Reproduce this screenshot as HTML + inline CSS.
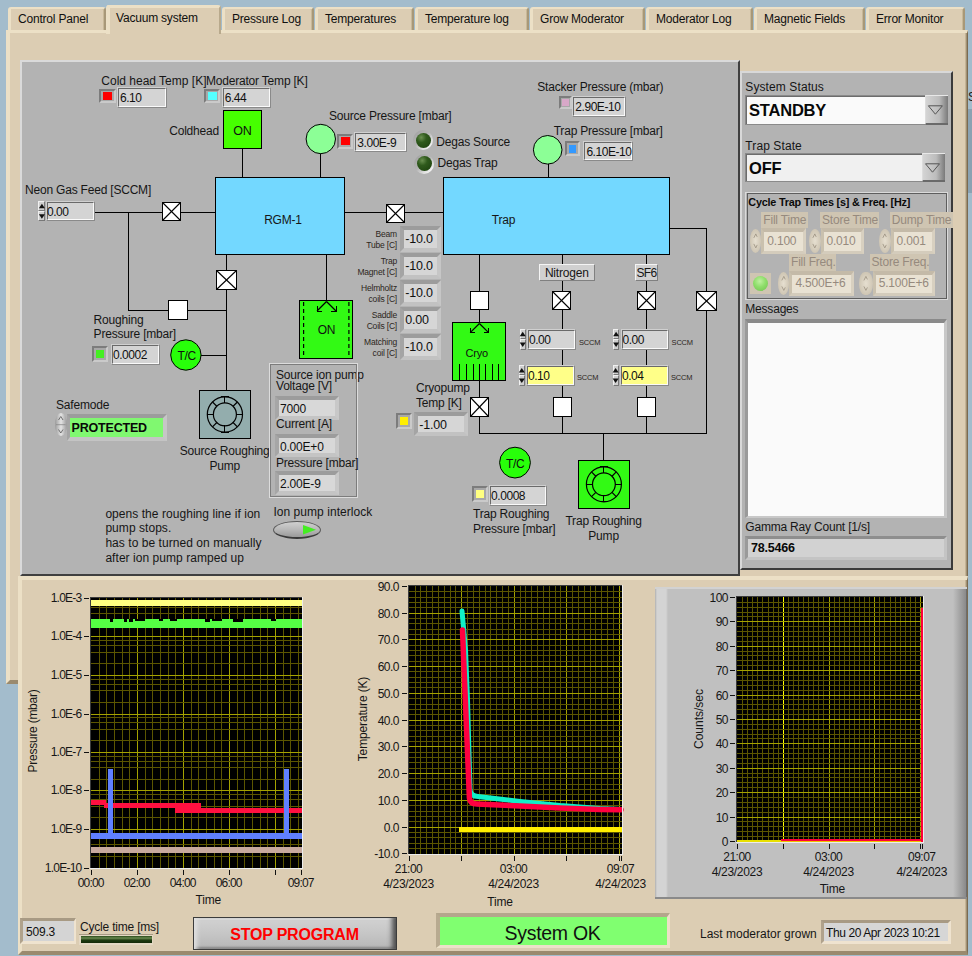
<!DOCTYPE html><html><head><meta charset="utf-8"><style>
html,body{margin:0;padding:0;}
body{width:972px;height:956px;position:relative;overflow:hidden;background:#a3bccc;font-family:"Liberation Sans", sans-serif;}
div{font-family:"Liberation Sans", sans-serif;letter-spacing:-0.2px;}
svg{position:absolute;left:0;top:0;}
</style></head><body>
<div style="position:absolute;left:6px;top:30px;width:962px;height:654px;box-sizing:border-box;background:#dccdb3;border-top:3px solid #ece0c6;border-left:4px solid #ece0c6;border-right:1px solid #7a6a50;border-bottom:4px solid #9a8a6e;box-shadow:inset -1px 0 0 #a09074, inset -2px 0 0 #c4b496;"></div>
<div style="position:absolute;left:8px;top:32px;width:957px;height:648px;box-sizing:border-box;"></div>
<div style="position:absolute;left:8px;top:7px;width:98px;height:23px;box-sizing:border-box;background:#dccdb3;border-top:2px solid #ece0c6;border-left:3px solid #ece0c6;border-right:2px solid #a89878;border-radius:3px 3px 0 0;box-shadow:inset -1px 0 0 #c8b898;"></div>
<div style="position:absolute;left:18px;top:12.1px;font-size:12px;line-height:15px;color:#101010;white-space:nowrap;">Control Panel</div>
<div style="position:absolute;left:106px;top:5px;width:115px;height:29px;box-sizing:border-box;background:#dccdb3;border-top:3px solid #ece0c6;border-left:4px solid #ece0c6;border-right:2px solid #b8a98c;border-radius:3px 3px 0 0;z-index:2;"></div>
<div style="position:absolute;left:110px;top:30px;width:109px;height:4px;box-sizing:border-box;background:#dccdb3;z-index:3;"></div>
<div style="position:absolute;left:116px;top:10.5px;font-size:12px;line-height:15px;color:#101010;white-space:nowrap;z-index:4;">Vacuum system</div>
<div style="position:absolute;left:222px;top:7px;width:92px;height:23px;box-sizing:border-box;background:#dccdb3;border-top:2px solid #ece0c6;border-left:3px solid #ece0c6;border-right:2px solid #a89878;border-radius:3px 3px 0 0;box-shadow:inset -1px 0 0 #c8b898;"></div>
<div style="position:absolute;left:232px;top:12.1px;font-size:12px;line-height:15px;color:#101010;white-space:nowrap;">Pressure Log</div>
<div style="position:absolute;left:315px;top:7px;width:99px;height:23px;box-sizing:border-box;background:#dccdb3;border-top:2px solid #ece0c6;border-left:3px solid #ece0c6;border-right:2px solid #a89878;border-radius:3px 3px 0 0;box-shadow:inset -1px 0 0 #c8b898;"></div>
<div style="position:absolute;left:325px;top:12.1px;font-size:12px;line-height:15px;color:#101010;white-space:nowrap;">Temperatures</div>
<div style="position:absolute;left:415px;top:7px;width:114px;height:23px;box-sizing:border-box;background:#dccdb3;border-top:2px solid #ece0c6;border-left:3px solid #ece0c6;border-right:2px solid #a89878;border-radius:3px 3px 0 0;box-shadow:inset -1px 0 0 #c8b898;"></div>
<div style="position:absolute;left:425px;top:12.1px;font-size:12px;line-height:15px;color:#101010;white-space:nowrap;">Temperature log</div>
<div style="position:absolute;left:530px;top:7px;width:115px;height:23px;box-sizing:border-box;background:#dccdb3;border-top:2px solid #ece0c6;border-left:3px solid #ece0c6;border-right:2px solid #a89878;border-radius:3px 3px 0 0;box-shadow:inset -1px 0 0 #c8b898;"></div>
<div style="position:absolute;left:540px;top:12.1px;font-size:12px;line-height:15px;color:#101010;white-space:nowrap;">Grow Moderator</div>
<div style="position:absolute;left:646px;top:7px;width:107px;height:23px;box-sizing:border-box;background:#dccdb3;border-top:2px solid #ece0c6;border-left:3px solid #ece0c6;border-right:2px solid #a89878;border-radius:3px 3px 0 0;box-shadow:inset -1px 0 0 #c8b898;"></div>
<div style="position:absolute;left:656px;top:12.1px;font-size:12px;line-height:15px;color:#101010;white-space:nowrap;">Moderator Log</div>
<div style="position:absolute;left:754px;top:7px;width:111px;height:23px;box-sizing:border-box;background:#dccdb3;border-top:2px solid #ece0c6;border-left:3px solid #ece0c6;border-right:2px solid #a89878;border-radius:3px 3px 0 0;box-shadow:inset -1px 0 0 #c8b898;"></div>
<div style="position:absolute;left:764px;top:12.1px;font-size:12px;line-height:15px;color:#101010;white-space:nowrap;">Magnetic Fields</div>
<div style="position:absolute;left:866px;top:7px;width:99px;height:23px;box-sizing:border-box;background:#dccdb3;border-top:2px solid #ece0c6;border-left:3px solid #ece0c6;border-right:2px solid #a89878;border-radius:3px 3px 0 0;box-shadow:inset -1px 0 0 #c8b898;"></div>
<div style="position:absolute;left:876px;top:12.1px;font-size:12px;line-height:15px;color:#101010;white-space:nowrap;">Error Monitor</div>
<div style="position:absolute;left:20px;top:60px;width:720px;height:516px;box-sizing:border-box;background:#b3b3b3;border-top:2px solid #dadada;border-left:2px solid #dadada;border-right:2px solid #404040;border-bottom:2px solid #404040;"></div>
<div style="position:absolute;left:740px;top:71px;width:213px;height:499px;box-sizing:border-box;background:#b3b3b3;border-top:2px solid #d8d8d8;border-left:2px solid #d8d8d8;border-right:2px solid #3a3a3a;border-bottom:2px solid #3a3a3a;"></div>
<svg width="972" height="956" viewBox="0 0 972 956" style="position:absolute;left:0;top:0"><rect x="94" y="212" width="122" height="1" fill="#000"/><rect x="128" y="212" width="1" height="99" fill="#000"/><rect x="128" y="310" width="99" height="1" fill="#000"/><rect x="242" y="148" width="1" height="30" fill="#000"/><rect x="320" y="153" width="1" height="25" fill="#000"/><rect x="344" y="212" width="100" height="1" fill="#000"/><rect x="226" y="254" width="1" height="137" fill="#000"/><rect x="201" y="355" width="26" height="1" fill="#000"/><rect x="326" y="254" width="1" height="47" fill="#000"/><rect x="548" y="164" width="1" height="14" fill="#000"/><rect x="479" y="254" width="1" height="180" fill="#000"/><rect x="562" y="254" width="1" height="180" fill="#000"/><rect x="646" y="254" width="1" height="180" fill="#000"/><rect x="669" y="228" width="38" height="1" fill="#000"/><rect x="706" y="228" width="1" height="206" fill="#000"/><rect x="479" y="433" width="228" height="1" fill="#000"/><rect x="603" y="433" width="1" height="28" fill="#000"/><rect x="215.5" y="177.5" width="129" height="77" fill="#73d8ff" stroke="#000" stroke-width="1"/><rect x="443.5" y="177.5" width="226" height="77" fill="#73d8ff" stroke="#000" stroke-width="1"/><rect x="223.5" y="110.5" width="38" height="38" fill="#46ff00" stroke="#000" stroke-width="1"/><circle cx="320.8" cy="139" r="14.7" fill="#8cff96" stroke="#000" stroke-width="1"/><circle cx="547.7" cy="149.8" r="14.3" fill="#8cff96" stroke="#000" stroke-width="1"/><rect x="162.5" y="202.5" width="18" height="18" fill="#fff" stroke="#000" stroke-width="1"/><line x1="162.5" y1="202.5" x2="180.5" y2="220.5" stroke="#000" stroke-width="1.1"/><line x1="162.5" y1="220.5" x2="180.5" y2="202.5" stroke="#000" stroke-width="1.1"/><rect x="386.5" y="204.5" width="18" height="18" fill="#fff" stroke="#000" stroke-width="1"/><line x1="386.5" y1="204.5" x2="404.5" y2="222.5" stroke="#000" stroke-width="1.1"/><line x1="386.5" y1="222.5" x2="404.5" y2="204.5" stroke="#000" stroke-width="1.1"/><rect x="216.5" y="270.5" width="20" height="19" fill="#fff" stroke="#000" stroke-width="1"/><line x1="216.5" y1="270.5" x2="236.5" y2="289.5" stroke="#000" stroke-width="1.1"/><line x1="216.5" y1="289.5" x2="236.5" y2="270.5" stroke="#000" stroke-width="1.1"/><rect x="168.5" y="300.5" width="19" height="19" fill="#fff" stroke="#000" stroke-width="1"/><circle cx="185.9" cy="355" r="15.2" fill="#28ff0a" stroke="#000" stroke-width="1"/><rect x="199.5" y="390.5" width="51" height="48" fill="#93adad" stroke="#000" stroke-width="1"/><circle cx="224.9" cy="414.4" r="17.6" fill="none" stroke="#000" stroke-width="1.2"/><circle cx="224.9" cy="414.4" r="11.5" fill="none" stroke="#000" stroke-width="1.2"/><rect x="236" y="414" width="7" height="1" fill="#000"/><line x1="233.0817279836453" y1="422.5317279836453" x2="237.39507934888323" y2="426.8450793488832" stroke="#000" stroke-width="1.2"/><rect x="224" y="425" width="1" height="8" fill="#000"/><line x1="216.81827201635468" y1="422.5317279836453" x2="212.50492065111675" y2="426.8450793488832" stroke="#000" stroke-width="1.2"/><rect x="207" y="414" width="7" height="1" fill="#000"/><line x1="216.81827201635468" y1="406.2682720163547" x2="212.50492065111675" y2="401.95492065111677" stroke="#000" stroke-width="1.2"/><rect x="224" y="396" width="1" height="7" fill="#000"/><line x1="233.0817279836453" y1="406.2682720163547" x2="237.39507934888323" y2="401.9549206511167" stroke="#000" stroke-width="1.2"/><rect x="221" y="396" width="8" height="1" fill="#000"/><rect x="221" y="432" width="8" height="1" fill="#000"/><rect x="299.5" y="300.5" width="53" height="58" fill="#32fa14" stroke="#000" stroke-width="1"/><line x1="303.6" y1="302" x2="303.6" y2="357" stroke="#000" stroke-width="1.2" stroke-dasharray="4,3"/><line x1="348.9" y1="302" x2="348.9" y2="357" stroke="#000" stroke-width="1.2" stroke-dasharray="4,3"/><line x1="326.5" y1="301.5" x2="317.0" y2="311.0" stroke="#000" stroke-width="1.2"/><line x1="326.5" y1="301.5" x2="336.0" y2="311.0" stroke="#000" stroke-width="1.2"/><rect x="317" y="306" width="1" height="6" fill="#000"/><rect x="317" y="311" width="5" height="1" fill="#000"/><rect x="336" y="306" width="1" height="6" fill="#000"/><rect x="331" y="311" width="6" height="1" fill="#000"/><rect x="470.5" y="291.5" width="18" height="18" fill="#fff" stroke="#000" stroke-width="1"/><rect x="452.5" y="322.5" width="53" height="58" fill="#32fa14" stroke="#000" stroke-width="1"/><line x1="479.4" y1="323.5" x2="470.2" y2="332.7" stroke="#000" stroke-width="1.2"/><line x1="479.4" y1="323.5" x2="488.59999999999997" y2="332.7" stroke="#000" stroke-width="1.2"/><rect x="470" y="328" width="1" height="5" fill="#000"/><rect x="470" y="332" width="5" height="1" fill="#000"/><rect x="488" y="328" width="1" height="5" fill="#000"/><rect x="484" y="332" width="5" height="1" fill="#000"/><rect x="459" y="364" width="1" height="17" fill="#000"/><rect x="466" y="364" width="1" height="17" fill="#000"/><rect x="473" y="364" width="1" height="17" fill="#000"/><rect x="479" y="364" width="1" height="17" fill="#000"/><rect x="485" y="364" width="1" height="17" fill="#000"/><rect x="492" y="364" width="1" height="17" fill="#000"/><rect x="498" y="364" width="1" height="17" fill="#000"/><rect x="470.5" y="397.5" width="18" height="19" fill="#fff" stroke="#000" stroke-width="1"/><line x1="470.5" y1="397.5" x2="488.5" y2="416.5" stroke="#000" stroke-width="1.1"/><line x1="470.5" y1="416.5" x2="488.5" y2="397.5" stroke="#000" stroke-width="1.1"/><rect x="552.5" y="291.5" width="18" height="18" fill="#fff" stroke="#000" stroke-width="1"/><line x1="552.5" y1="291.5" x2="570.5" y2="309.5" stroke="#000" stroke-width="1.1"/><line x1="552.5" y1="309.5" x2="570.5" y2="291.5" stroke="#000" stroke-width="1.1"/><rect x="637.5" y="291.5" width="18" height="18" fill="#fff" stroke="#000" stroke-width="1"/><line x1="637.5" y1="291.5" x2="655.5" y2="309.5" stroke="#000" stroke-width="1.1"/><line x1="637.5" y1="309.5" x2="655.5" y2="291.5" stroke="#000" stroke-width="1.1"/><rect x="696.5" y="291.5" width="20" height="19" fill="#fff" stroke="#000" stroke-width="1"/><line x1="696.5" y1="291.5" x2="716.5" y2="310.5" stroke="#000" stroke-width="1.1"/><line x1="696.5" y1="310.5" x2="716.5" y2="291.5" stroke="#000" stroke-width="1.1"/><rect x="553.5" y="397.5" width="18" height="19" fill="#fff" stroke="#000" stroke-width="1"/><rect x="637.5" y="397.5" width="18" height="19" fill="#fff" stroke="#000" stroke-width="1"/><circle cx="515" cy="462.6" r="15.4" fill="#28ff0a" stroke="#000" stroke-width="1"/><rect x="578.5" y="460.5" width="51" height="48" fill="#32fa14" stroke="#000" stroke-width="1"/><circle cx="603.9" cy="484.3" r="17.5" fill="none" stroke="#000" stroke-width="1.2"/><circle cx="603.9" cy="484.3" r="11.4" fill="none" stroke="#000" stroke-width="1.2"/><rect x="615" y="484" width="7" height="1" fill="#000"/><line x1="611.9843586944202" y1="492.3843586944202" x2="616.2725837410256" y2="496.6725837410257" stroke="#000" stroke-width="1.2"/><rect x="603" y="495" width="1" height="7" fill="#000"/><line x1="595.8156413055798" y1="492.3843586944202" x2="591.5274162589743" y2="496.6725837410257" stroke="#000" stroke-width="1.2"/><rect x="586" y="484" width="7" height="1" fill="#000"/><line x1="595.8156413055798" y1="476.2156413055798" x2="591.5274162589743" y2="471.92741625897435" stroke="#000" stroke-width="1.2"/><rect x="603" y="466" width="1" height="7" fill="#000"/><line x1="611.9843586944202" y1="476.2156413055798" x2="616.2725837410256" y2="471.92741625897435" stroke="#000" stroke-width="1.2"/><rect x="600" y="466" width="8" height="1" fill="#000"/><rect x="600" y="501" width="8" height="1" fill="#000"/></svg>
<div style="position:absolute;left:101.3px;top:73.5px;font-size:12px;line-height:15px;color:#161616;white-space:nowrap;letter-spacing:0;">Cold head Temp [K]</div>
<div style="position:absolute;left:206px;top:73.5px;font-size:12px;line-height:15px;color:#161616;white-space:nowrap;">Moderator Temp [K]</div>
<div style="position:absolute;left:99.3px;top:88.7px;width:16.400000000000006px;height:14.799999999999997px;box-sizing:border-box;background:#a8a8a8;border-top:2px solid #7c7c7c;border-left:2px solid #7c7c7c;border-right:2px solid #cacaca;border-bottom:2px solid #cacaca;"></div>
<div style="position:absolute;left:102.8px;top:92.2px;width:9.400000000000006px;height:7.799999999999997px;box-sizing:border-box;background:#ff0000;"></div>
<div style="position:absolute;left:117px;top:87px;width:50px;height:21px;box-sizing:border-box;background:#e6e6e6;border-top:1px solid #d0d0d0;border-left:1px solid #d0d0d0;border-right:1px solid #8a8a8a;border-bottom:1px solid #8a8a8a;"></div>
<div style="position:absolute;left:118px;top:88px;width:48px;height:19px;box-sizing:border-box;background:#d4d4d4;border-top:1px solid #6a6a6a;border-left:1px solid #6a6a6a;border-right:1px solid #fafafa;border-bottom:1px solid #fafafa;"></div>
<div style="position:absolute;left:120px;top:88px;height:21px;line-height:21px;font-size:12px;color:#101010;white-space:nowrap;letter-spacing:-0.45px;">6.10</div>
<div style="position:absolute;left:204.2px;top:88.7px;width:16.30000000000001px;height:14.799999999999997px;box-sizing:border-box;background:#a8a8a8;border-top:2px solid #7c7c7c;border-left:2px solid #7c7c7c;border-right:2px solid #cacaca;border-bottom:2px solid #cacaca;"></div>
<div style="position:absolute;left:207.7px;top:92.2px;width:9.300000000000011px;height:7.799999999999997px;box-sizing:border-box;background:#55ffff;"></div>
<div style="position:absolute;left:221.7px;top:87px;width:48.900000000000034px;height:21px;box-sizing:border-box;background:#e6e6e6;border-top:1px solid #d0d0d0;border-left:1px solid #d0d0d0;border-right:1px solid #8a8a8a;border-bottom:1px solid #8a8a8a;"></div>
<div style="position:absolute;left:222.7px;top:88px;width:46.900000000000034px;height:19px;box-sizing:border-box;background:#d4d4d4;border-top:1px solid #6a6a6a;border-left:1px solid #6a6a6a;border-right:1px solid #fafafa;border-bottom:1px solid #fafafa;"></div>
<div style="position:absolute;left:224.7px;top:88px;height:21px;line-height:21px;font-size:12px;color:#101010;white-space:nowrap;letter-spacing:-0.45px;">6.44</div>
<div style="position:absolute;right:753px;top:124.1px;font-size:12px;line-height:15px;color:#161616;white-space:nowrap;text-align:right;">Coldhead</div>
<div style="position:absolute;left:92.5px;width:300px;text-align:center;top:123.7px;font-size:12.5px;line-height:15.5px;color:#101010;white-space:nowrap;">ON</div>
<div style="position:absolute;left:329px;top:109.3px;font-size:12px;line-height:15px;color:#161616;white-space:nowrap;">Source Pressure [mbar]</div>
<div style="position:absolute;left:337.3px;top:133.5px;width:15.899999999999977px;height:15.199999999999989px;box-sizing:border-box;background:#a8a8a8;border-top:2px solid #7c7c7c;border-left:2px solid #7c7c7c;border-right:2px solid #cacaca;border-bottom:2px solid #cacaca;"></div>
<div style="position:absolute;left:340.8px;top:137.0px;width:8.899999999999977px;height:8.199999999999989px;box-sizing:border-box;background:#ff0000;"></div>
<div style="position:absolute;left:354.3px;top:131.7px;width:53.19999999999999px;height:20.80000000000001px;box-sizing:border-box;background:#e6e6e6;border-top:1px solid #d0d0d0;border-left:1px solid #d0d0d0;border-right:1px solid #8a8a8a;border-bottom:1px solid #8a8a8a;"></div>
<div style="position:absolute;left:355.3px;top:132.7px;width:51.19999999999999px;height:18.80000000000001px;box-sizing:border-box;background:#d4d4d4;border-top:1px solid #6a6a6a;border-left:1px solid #6a6a6a;border-right:1px solid #fafafa;border-bottom:1px solid #fafafa;"></div>
<div style="position:absolute;left:357.3px;top:132.7px;height:20.80000000000001px;line-height:20.80000000000001px;font-size:12px;color:#101010;white-space:nowrap;letter-spacing:-0.45px;">3.00E-9</div>
<div style="position:absolute;left:413.3px;top:130.0px;width:20px;height:20px;border-radius:50%;background:linear-gradient(135deg,#a0a0a0 0%,#b3b3b3 45%,#f4f4f4 85%);"></div>
<div style="position:absolute;left:415.8px;top:132.5px;width:15px;height:15px;border-radius:50%;background:radial-gradient(circle at 35% 30%, #6a9050 0%, #2f5a1c 35%, #224812 75%, #163008 100%);"></div>
<div style="position:absolute;left:414.3px;top:153.9px;width:20px;height:20px;border-radius:50%;background:linear-gradient(135deg,#a0a0a0 0%,#b3b3b3 45%,#f4f4f4 85%);"></div>
<div style="position:absolute;left:416.8px;top:156.4px;width:15px;height:15px;border-radius:50%;background:radial-gradient(circle at 35% 30%, #6a9050 0%, #2f5a1c 35%, #224812 75%, #163008 100%);"></div>
<div style="position:absolute;left:436.3px;top:134.5px;font-size:12px;line-height:15px;color:#161616;white-space:nowrap;">Degas Source</div>
<div style="position:absolute;left:437.5px;top:156.0px;font-size:12px;line-height:15px;color:#161616;white-space:nowrap;">Degas Trap</div>
<div style="position:absolute;left:537.3px;top:80.0px;font-size:12px;line-height:15px;color:#161616;white-space:nowrap;">Stacker Pressure (mbar)</div>
<div style="position:absolute;left:559.2px;top:96.3px;width:12.699999999999932px;height:12.400000000000006px;box-sizing:border-box;background:#a8a8a8;border-top:2px solid #7c7c7c;border-left:2px solid #7c7c7c;border-right:2px solid #cacaca;border-bottom:2px solid #cacaca;"></div>
<div style="position:absolute;left:562.2px;top:99.3px;width:6.699999999999932px;height:6.400000000000006px;box-sizing:border-box;background:#d8a8c8;"></div>
<div style="position:absolute;left:572.3px;top:96px;width:53.40000000000009px;height:21px;box-sizing:border-box;background:#e6e6e6;border-top:1px solid #d0d0d0;border-left:1px solid #d0d0d0;border-right:1px solid #8a8a8a;border-bottom:1px solid #8a8a8a;"></div>
<div style="position:absolute;left:573.3px;top:97px;width:51.40000000000009px;height:19px;box-sizing:border-box;background:#d4d4d4;border-top:1px solid #6a6a6a;border-left:1px solid #6a6a6a;border-right:1px solid #fafafa;border-bottom:1px solid #fafafa;"></div>
<div style="position:absolute;left:575.3px;top:97px;height:21px;line-height:21px;font-size:12px;color:#101010;white-space:nowrap;letter-spacing:-0.45px;">2.90E-10</div>
<div style="position:absolute;left:553.7px;top:124.1px;font-size:12px;line-height:15px;color:#161616;white-space:nowrap;">Trap Pressure [mbar]</div>
<div style="position:absolute;left:565.3px;top:141px;width:14.700000000000045px;height:15.400000000000006px;box-sizing:border-box;background:#a8a8a8;border-top:2px solid #7c7c7c;border-left:2px solid #7c7c7c;border-right:2px solid #cacaca;border-bottom:2px solid #cacaca;"></div>
<div style="position:absolute;left:568.8px;top:144.5px;width:7.7000000000000455px;height:8.400000000000006px;box-sizing:border-box;background:#3399ff;"></div>
<div style="position:absolute;left:583.4px;top:140.5px;width:49.39999999999998px;height:20.0px;box-sizing:border-box;background:#e6e6e6;border-top:1px solid #d0d0d0;border-left:1px solid #d0d0d0;border-right:1px solid #8a8a8a;border-bottom:1px solid #8a8a8a;"></div>
<div style="position:absolute;left:584.4px;top:141.5px;width:47.39999999999998px;height:18.0px;box-sizing:border-box;background:#d4d4d4;border-top:1px solid #6a6a6a;border-left:1px solid #6a6a6a;border-right:1px solid #fafafa;border-bottom:1px solid #fafafa;"></div>
<div style="position:absolute;left:586.4px;top:141.5px;height:20.0px;line-height:20.0px;font-size:12px;color:#101010;white-space:nowrap;letter-spacing:-0.45px;">6.10E-10</div>
<div style="position:absolute;left:25px;top:182.5px;font-size:12px;line-height:15px;color:#161616;white-space:nowrap;">Neon Gas Feed [SCCM]</div>
<div style="position:absolute;left:38.3px;top:201.3px;width:7.200000000000003px;height:10.0px;box-sizing:border-box;background:#cfcfcf;border-top:1px solid #f0f0f0;border-left:1px solid #f0f0f0;border-right:1px solid #777;border-bottom:1px solid #777;"></div>
<svg width="972" height="956" style="position:absolute;left:0;top:0"><path d="M38.9,208.3 L44.9,208.3 L41.9,203.8Z" fill="#111"/></svg>
<div style="position:absolute;left:38.3px;top:211.3px;width:7.200000000000003px;height:10.0px;box-sizing:border-box;background:#cfcfcf;border-top:1px solid #f0f0f0;border-left:1px solid #f0f0f0;border-right:1px solid #777;border-bottom:1px solid #777;"></div>
<svg width="972" height="956" style="position:absolute;left:0;top:0"><path d="M38.9,214.3 L44.9,214.3 L41.9,218.8Z" fill="#111"/></svg>
<div style="position:absolute;left:46px;top:201.3px;width:48.5px;height:20.0px;box-sizing:border-box;background:#e6e6e6;border-top:1px solid #d0d0d0;border-left:1px solid #d0d0d0;border-right:1px solid #8a8a8a;border-bottom:1px solid #8a8a8a;"></div>
<div style="position:absolute;left:47px;top:202.3px;width:46.5px;height:18.0px;box-sizing:border-box;background:#d4d4d4;border-top:1px solid #6a6a6a;border-left:1px solid #6a6a6a;border-right:1px solid #fafafa;border-bottom:1px solid #fafafa;"></div>
<div style="position:absolute;left:47px;top:202.3px;height:20.0px;line-height:20.0px;font-size:12px;color:#101010;white-space:nowrap;letter-spacing:-0.45px;">0.00</div>
<div style="position:absolute;left:133px;width:300px;text-align:center;top:212.5px;font-size:12px;line-height:15px;color:#161616;white-space:nowrap;">RGM-1</div>
<div style="position:absolute;left:353.5px;width:300px;text-align:center;top:212.5px;font-size:12px;line-height:15px;color:#161616;white-space:nowrap;">Trap</div>
<div style="position:absolute;left:400.3px;top:226.3px;width:41.0px;height:25.5px;box-sizing:border-box;background:#d6d6d6;border-top:4px solid #9c9c9c;border-left:4px solid #a4a4a4;border-right:4px solid #c6c6c6;border-bottom:4px solid #c2c2c2;"></div>
<div style="position:absolute;left:405.3px;top:227.3px;height:25.5px;line-height:25.5px;font-size:12.5px;color:#101010;white-space:nowrap;">-10.0</div>
<div style="position:absolute;right:575px;top:228.6px;font-size:8.5px;line-height:11.5px;color:#2c261c;white-space:nowrap;text-align:right;">Beam</div>
<div style="position:absolute;right:575px;top:239.6px;font-size:8.5px;line-height:11.5px;color:#2c261c;white-space:nowrap;text-align:right;">Tube [C]</div>
<div style="position:absolute;left:400.3px;top:253.4px;width:41.0px;height:25.49999999999997px;box-sizing:border-box;background:#d6d6d6;border-top:4px solid #9c9c9c;border-left:4px solid #a4a4a4;border-right:4px solid #c6c6c6;border-bottom:4px solid #c2c2c2;"></div>
<div style="position:absolute;left:405.3px;top:254.4px;height:25.49999999999997px;line-height:25.49999999999997px;font-size:12.5px;color:#101010;white-space:nowrap;">-10.0</div>
<div style="position:absolute;right:575px;top:255.6px;font-size:8.5px;line-height:11.5px;color:#2c261c;white-space:nowrap;text-align:right;">Trap</div>
<div style="position:absolute;right:575px;top:266.6px;font-size:8.5px;line-height:11.5px;color:#2c261c;white-space:nowrap;text-align:right;">Magnet [C]</div>
<div style="position:absolute;left:400.3px;top:280.4px;width:41.0px;height:25.5px;box-sizing:border-box;background:#d6d6d6;border-top:4px solid #9c9c9c;border-left:4px solid #a4a4a4;border-right:4px solid #c6c6c6;border-bottom:4px solid #c2c2c2;"></div>
<div style="position:absolute;left:405.3px;top:281.4px;height:25.5px;line-height:25.5px;font-size:12.5px;color:#101010;white-space:nowrap;">-10.0</div>
<div style="position:absolute;right:575px;top:282.6px;font-size:8.5px;line-height:11.5px;color:#2c261c;white-space:nowrap;text-align:right;">Helmholtz</div>
<div style="position:absolute;right:575px;top:293.6px;font-size:8.5px;line-height:11.5px;color:#2c261c;white-space:nowrap;text-align:right;">coils [C]</div>
<div style="position:absolute;left:400.3px;top:307.4px;width:41.0px;height:25.5px;box-sizing:border-box;background:#d6d6d6;border-top:4px solid #9c9c9c;border-left:4px solid #a4a4a4;border-right:4px solid #c6c6c6;border-bottom:4px solid #c2c2c2;"></div>
<div style="position:absolute;left:405.3px;top:308.4px;height:25.5px;line-height:25.5px;font-size:12.5px;color:#101010;white-space:nowrap;">0.00</div>
<div style="position:absolute;right:575px;top:309.6px;font-size:8.5px;line-height:11.5px;color:#2c261c;white-space:nowrap;text-align:right;">Saddle</div>
<div style="position:absolute;right:575px;top:320.6px;font-size:8.5px;line-height:11.5px;color:#2c261c;white-space:nowrap;text-align:right;">Coils [C]</div>
<div style="position:absolute;left:400.3px;top:334.4px;width:41.0px;height:25.5px;box-sizing:border-box;background:#d6d6d6;border-top:4px solid #9c9c9c;border-left:4px solid #a4a4a4;border-right:4px solid #c6c6c6;border-bottom:4px solid #c2c2c2;"></div>
<div style="position:absolute;left:405.3px;top:335.4px;height:25.5px;line-height:25.5px;font-size:12.5px;color:#101010;white-space:nowrap;">-10.0</div>
<div style="position:absolute;right:575px;top:336.6px;font-size:8.5px;line-height:11.5px;color:#2c261c;white-space:nowrap;text-align:right;">Matching</div>
<div style="position:absolute;right:575px;top:347.6px;font-size:8.5px;line-height:11.5px;color:#2c261c;white-space:nowrap;text-align:right;">coil [C]</div>
<div style="position:absolute;left:176.5px;width:300px;text-align:center;top:323.0px;font-size:12px;line-height:15px;color:#101010;white-space:nowrap;">ON</div>
<div style="position:absolute;left:538.7px;top:264.4px;width:56.299999999999955px;height:16.200000000000045px;box-sizing:border-box;background:#d0d0d0;border-top:1px solid #f4f4f4;border-left:1px solid #f4f4f4;border-right:1px solid #808080;border-bottom:1px solid #808080;"></div>
<div style="position:absolute;left:416.79999999999995px;width:300px;text-align:center;top:266.0px;font-size:12px;line-height:15px;color:#161616;white-space:nowrap;">Nitrogen</div>
<div style="position:absolute;left:635.3px;top:264.4px;width:22.700000000000045px;height:16.200000000000045px;box-sizing:border-box;background:#d0d0d0;border-top:1px solid #f4f4f4;border-left:1px solid #f4f4f4;border-right:1px solid #808080;border-bottom:1px solid #808080;"></div>
<div style="position:absolute;left:496.5px;width:300px;text-align:center;top:266.0px;font-size:12px;line-height:15px;color:#161616;white-space:nowrap;letter-spacing:-0.6px;">SF6</div>
<div style="position:absolute;left:519.6px;top:329.2px;width:6.199999999999932px;height:10.199999999999989px;box-sizing:border-box;background:#cfcfcf;border-top:1px solid #f0f0f0;border-left:1px solid #f0f0f0;border-right:1px solid #777;border-bottom:1px solid #777;"></div>
<svg width="972" height="956" style="position:absolute;left:0;top:0"><path d="M519.7,336.3 L525.7,336.3 L522.7,331.8Z" fill="#111"/></svg>
<div style="position:absolute;left:519.6px;top:339.4px;width:6.199999999999932px;height:10.200000000000045px;box-sizing:border-box;background:#cfcfcf;border-top:1px solid #f0f0f0;border-left:1px solid #f0f0f0;border-right:1px solid #777;border-bottom:1px solid #777;"></div>
<svg width="972" height="956" style="position:absolute;left:0;top:0"><path d="M519.7,342.5 L525.7,342.5 L522.7,347.0Z" fill="#111"/></svg>
<div style="position:absolute;left:527px;top:329.2px;width:48.60000000000002px;height:20.600000000000023px;box-sizing:border-box;background:#e6e6e6;border-top:1px solid #d0d0d0;border-left:1px solid #d0d0d0;border-right:1px solid #8a8a8a;border-bottom:1px solid #8a8a8a;"></div>
<div style="position:absolute;left:528px;top:330.2px;width:46.60000000000002px;height:18.600000000000023px;box-sizing:border-box;background:#d4d4d4;border-top:1px solid #6a6a6a;border-left:1px solid #6a6a6a;border-right:1px solid #fafafa;border-bottom:1px solid #fafafa;"></div>
<div style="position:absolute;left:529px;top:330.2px;height:20.600000000000023px;line-height:20.600000000000023px;font-size:12px;color:#101010;white-space:nowrap;letter-spacing:-0.45px;">0.00</div>
<div style="position:absolute;left:579px;top:337.8px;font-size:7.5px;line-height:10.5px;color:#2c261c;white-space:nowrap;">SCCM</div>
<div style="position:absolute;left:518.7px;top:365.3px;width:6.199999999999932px;height:10.150000000000034px;box-sizing:border-box;background:#cfcfcf;border-top:1px solid #f0f0f0;border-left:1px solid #f0f0f0;border-right:1px solid #777;border-bottom:1px solid #777;"></div>
<svg width="972" height="956" style="position:absolute;left:0;top:0"><path d="M518.8,372.4 L524.8,372.4 L521.8,367.9Z" fill="#111"/></svg>
<div style="position:absolute;left:518.7px;top:375.45000000000005px;width:6.199999999999932px;height:10.149999999999977px;box-sizing:border-box;background:#cfcfcf;border-top:1px solid #f0f0f0;border-left:1px solid #f0f0f0;border-right:1px solid #777;border-bottom:1px solid #777;"></div>
<svg width="972" height="956" style="position:absolute;left:0;top:0"><path d="M518.8,378.5 L524.8,378.5 L521.8,383.0Z" fill="#111"/></svg>
<div style="position:absolute;left:526px;top:365.3px;width:48.700000000000045px;height:20.30000000000001px;box-sizing:border-box;background:#e6e6e6;border-top:1px solid #d0d0d0;border-left:1px solid #d0d0d0;border-right:1px solid #8a8a8a;border-bottom:1px solid #8a8a8a;"></div>
<div style="position:absolute;left:527px;top:366.3px;width:46.700000000000045px;height:18.30000000000001px;box-sizing:border-box;background:#ffff88;border-top:1px solid #6a6a6a;border-left:1px solid #6a6a6a;border-right:1px solid #fafafa;border-bottom:1px solid #fafafa;"></div>
<div style="position:absolute;left:528px;top:366.3px;height:20.30000000000001px;line-height:20.30000000000001px;font-size:12px;color:#101010;white-space:nowrap;letter-spacing:-0.45px;">0.10</div>
<div style="position:absolute;left:577px;top:372.8px;font-size:7.5px;line-height:10.5px;color:#2c261c;white-space:nowrap;">SCCM</div>
<div style="position:absolute;left:613px;top:329.2px;width:6.2000000000000455px;height:10.199999999999989px;box-sizing:border-box;background:#cfcfcf;border-top:1px solid #f0f0f0;border-left:1px solid #f0f0f0;border-right:1px solid #777;border-bottom:1px solid #777;"></div>
<svg width="972" height="956" style="position:absolute;left:0;top:0"><path d="M613.1,336.3 L619.1,336.3 L616.1,331.8Z" fill="#111"/></svg>
<div style="position:absolute;left:613px;top:339.4px;width:6.2000000000000455px;height:10.200000000000045px;box-sizing:border-box;background:#cfcfcf;border-top:1px solid #f0f0f0;border-left:1px solid #f0f0f0;border-right:1px solid #777;border-bottom:1px solid #777;"></div>
<svg width="972" height="956" style="position:absolute;left:0;top:0"><path d="M613.1,342.5 L619.1,342.5 L616.1,347.0Z" fill="#111"/></svg>
<div style="position:absolute;left:620.5px;top:329.2px;width:48.5px;height:20.600000000000023px;box-sizing:border-box;background:#e6e6e6;border-top:1px solid #d0d0d0;border-left:1px solid #d0d0d0;border-right:1px solid #8a8a8a;border-bottom:1px solid #8a8a8a;"></div>
<div style="position:absolute;left:621.5px;top:330.2px;width:46.5px;height:18.600000000000023px;box-sizing:border-box;background:#d4d4d4;border-top:1px solid #6a6a6a;border-left:1px solid #6a6a6a;border-right:1px solid #fafafa;border-bottom:1px solid #fafafa;"></div>
<div style="position:absolute;left:622.5px;top:330.2px;height:20.600000000000023px;line-height:20.600000000000023px;font-size:12px;color:#101010;white-space:nowrap;letter-spacing:-0.45px;">0.00</div>
<div style="position:absolute;left:671.6px;top:337.8px;font-size:7.5px;line-height:10.5px;color:#2c261c;white-space:nowrap;">SCCM</div>
<div style="position:absolute;left:612.5px;top:365.3px;width:6.2000000000000455px;height:10.150000000000034px;box-sizing:border-box;background:#cfcfcf;border-top:1px solid #f0f0f0;border-left:1px solid #f0f0f0;border-right:1px solid #777;border-bottom:1px solid #777;"></div>
<svg width="972" height="956" style="position:absolute;left:0;top:0"><path d="M612.6,372.4 L618.6,372.4 L615.6,367.9Z" fill="#111"/></svg>
<div style="position:absolute;left:612.5px;top:375.45000000000005px;width:6.2000000000000455px;height:10.149999999999977px;box-sizing:border-box;background:#cfcfcf;border-top:1px solid #f0f0f0;border-left:1px solid #f0f0f0;border-right:1px solid #777;border-bottom:1px solid #777;"></div>
<svg width="972" height="956" style="position:absolute;left:0;top:0"><path d="M612.6,378.5 L618.6,378.5 L615.6,383.0Z" fill="#111"/></svg>
<div style="position:absolute;left:620px;top:365.3px;width:48.5px;height:20.30000000000001px;box-sizing:border-box;background:#e6e6e6;border-top:1px solid #d0d0d0;border-left:1px solid #d0d0d0;border-right:1px solid #8a8a8a;border-bottom:1px solid #8a8a8a;"></div>
<div style="position:absolute;left:621px;top:366.3px;width:46.5px;height:18.30000000000001px;box-sizing:border-box;background:#ffff88;border-top:1px solid #6a6a6a;border-left:1px solid #6a6a6a;border-right:1px solid #fafafa;border-bottom:1px solid #fafafa;"></div>
<div style="position:absolute;left:622px;top:366.3px;height:20.30000000000001px;line-height:20.30000000000001px;font-size:12px;color:#101010;white-space:nowrap;letter-spacing:-0.45px;">0.04</div>
<div style="position:absolute;left:671px;top:372.8px;font-size:7.5px;line-height:10.5px;color:#2c261c;white-space:nowrap;">SCCM</div>
<div style="position:absolute;left:326.8px;width:300px;text-align:center;top:346.3px;font-size:11px;line-height:14px;color:#101010;white-space:nowrap;">Cryo</div>
<div style="position:absolute;left:416px;top:380.5px;font-size:12px;line-height:15px;color:#161616;white-space:nowrap;">Cryopump</div>
<div style="position:absolute;left:416px;top:395.5px;font-size:12px;line-height:15px;color:#161616;white-space:nowrap;">Temp [K]</div>
<div style="position:absolute;left:396px;top:413.3px;width:15.800000000000011px;height:15.300000000000011px;box-sizing:border-box;background:#a8a8a8;border-top:2px solid #7c7c7c;border-left:2px solid #7c7c7c;border-right:2px solid #cacaca;border-bottom:2px solid #cacaca;"></div>
<div style="position:absolute;left:400px;top:417.3px;width:7.800000000000011px;height:7.300000000000011px;box-sizing:border-box;background:#ffee00;"></div>
<div style="position:absolute;left:414.3px;top:411.5px;width:53.89999999999998px;height:24.100000000000023px;box-sizing:border-box;background:#d6d6d6;border-top:4px solid #9c9c9c;border-left:4px solid #a4a4a4;border-right:4px solid #c6c6c6;border-bottom:4px solid #c2c2c2;"></div>
<div style="position:absolute;left:419.3px;top:412.5px;height:24.100000000000023px;line-height:24.100000000000023px;font-size:12.5px;color:#101010;white-space:nowrap;">-1.00</div>
<div style="position:absolute;left:365.20000000000005px;width:300px;text-align:center;top:456.5px;font-size:12px;line-height:15px;color:#101010;white-space:nowrap;letter-spacing:-0.4px;">T/C</div>
<div style="position:absolute;left:472px;top:486.3px;width:16.19999999999999px;height:15.300000000000011px;box-sizing:border-box;background:#a8a8a8;border-top:2px solid #7c7c7c;border-left:2px solid #7c7c7c;border-right:2px solid #cacaca;border-bottom:2px solid #cacaca;"></div>
<div style="position:absolute;left:476px;top:490.3px;width:8.199999999999989px;height:7.300000000000011px;box-sizing:border-box;background:#ffff80;"></div>
<div style="position:absolute;left:489.1px;top:485px;width:57.5px;height:20.600000000000023px;box-sizing:border-box;background:#e6e6e6;border-top:1px solid #d0d0d0;border-left:1px solid #d0d0d0;border-right:1px solid #8a8a8a;border-bottom:1px solid #8a8a8a;"></div>
<div style="position:absolute;left:490.1px;top:486px;width:55.5px;height:18.600000000000023px;box-sizing:border-box;background:#d4d4d4;border-top:1px solid #6a6a6a;border-left:1px solid #6a6a6a;border-right:1px solid #fafafa;border-bottom:1px solid #fafafa;"></div>
<div style="position:absolute;left:491.1px;top:486px;height:20.600000000000023px;line-height:20.600000000000023px;font-size:12px;color:#101010;white-space:nowrap;letter-spacing:-0.45px;">0.0008</div>
<div style="position:absolute;left:473px;top:506.5px;font-size:12px;line-height:15px;color:#161616;white-space:nowrap;">Trap Roughing</div>
<div style="position:absolute;left:473px;top:521.5px;font-size:12px;line-height:15px;color:#161616;white-space:nowrap;">Pressure [mbar]</div>
<div style="position:absolute;left:453.6px;width:300px;text-align:center;top:513.5px;font-size:12px;line-height:15px;color:#161616;white-space:nowrap;">Trap Roughing</div>
<div style="position:absolute;left:453.6px;width:300px;text-align:center;top:528.5px;font-size:12px;line-height:15px;color:#161616;white-space:nowrap;">Pump</div>
<div style="position:absolute;left:36.599999999999994px;width:300px;text-align:center;top:348.9px;font-size:12px;line-height:15px;color:#101010;white-space:nowrap;letter-spacing:-0.4px;">T/C</div>
<div style="position:absolute;left:93.6px;top:312.5px;font-size:12px;line-height:15px;color:#161616;white-space:nowrap;">Roughing</div>
<div style="position:absolute;left:93.6px;top:327.0px;font-size:12px;line-height:15px;color:#161616;white-space:nowrap;">Pressure [mbar]</div>
<div style="position:absolute;left:92.2px;top:345.8px;width:16.099999999999994px;height:16.0px;box-sizing:border-box;background:#a8a8a8;border-top:2px solid #7c7c7c;border-left:2px solid #7c7c7c;border-right:2px solid #cacaca;border-bottom:2px solid #cacaca;"></div>
<div style="position:absolute;left:96.2px;top:349.8px;width:8.099999999999994px;height:8.0px;box-sizing:border-box;background:#44ee22;"></div>
<div style="position:absolute;left:111px;top:344px;width:48.599999999999994px;height:20.5px;box-sizing:border-box;background:#e6e6e6;border-top:1px solid #d0d0d0;border-left:1px solid #d0d0d0;border-right:1px solid #8a8a8a;border-bottom:1px solid #8a8a8a;"></div>
<div style="position:absolute;left:112px;top:345px;width:46.599999999999994px;height:18.5px;box-sizing:border-box;background:#d4d4d4;border-top:1px solid #6a6a6a;border-left:1px solid #6a6a6a;border-right:1px solid #fafafa;border-bottom:1px solid #fafafa;"></div>
<div style="position:absolute;left:113px;top:345px;height:20.5px;line-height:20.5px;font-size:12px;color:#101010;white-space:nowrap;letter-spacing:-0.45px;">0.0002</div>
<div style="position:absolute;left:56px;top:397.5px;font-size:12px;line-height:15px;color:#161616;white-space:nowrap;">Safemode</div>
<div style="position:absolute;left:54.9px;top:413px;width:11.800000000000004px;height:23.399999999999977px;box-sizing:border-box;background:linear-gradient(90deg,#9a9a9a,#e4e4e4 50%,#9a9a9a);border-radius:6px/11px;"></div>
<svg width="972" height="956" style="position:absolute;left:0;top:0"><path d="M58.5,420 L60.8,416.5 L63,420 M58.5,429.5 L60.8,433 L63,429.5" stroke="#555" stroke-width="0.8" fill="none"/><line x1="56" y1="424.7" x2="65.5" y2="424.7" stroke="#888" stroke-width="0.8"/></svg>
<div style="position:absolute;left:66.7px;top:414.2px;width:100.3px;height:27.19999999999999px;box-sizing:border-box;background:#80f870;border-top:4px solid #9c9c9c;border-left:3px solid #a4a4a4;border-right:4px solid #c6c6c6;border-bottom:4px solid #c4c4c4;"></div>
<div style="position:absolute;left:71.6px;top:421.2px;font-size:12.5px;line-height:15.5px;color:#080808;white-space:nowrap;font-weight:bold;">PROTECTED</div>
<div style="position:absolute;left:74.69999999999999px;width:300px;text-align:center;top:443.5px;font-size:12px;line-height:15px;color:#161616;white-space:nowrap;">Source Roughing</div>
<div style="position:absolute;left:74.69999999999999px;width:300px;text-align:center;top:458.5px;font-size:12px;line-height:15px;color:#161616;white-space:nowrap;">Pump</div>
<div style="position:absolute;left:269.4px;top:362.6px;width:89.0px;height:135.5px;box-sizing:border-box;border:1px solid #dcdcdc;"></div>
<div style="position:absolute;left:270.4px;top:363.6px;width:87.0px;height:133.5px;box-sizing:border-box;border:1px solid #7c7c7c;"></div>
<div style="position:absolute;left:276px;top:367.8px;font-size:12px;line-height:15px;color:#161616;white-space:nowrap;">Source ion pump</div>
<div style="position:absolute;left:356.4px;top:364px;width:2.0px;height:15px;box-sizing:border-box;background:#7c7c7c;border-right:1px solid #dcdcdc;"></div>
<div style="position:absolute;left:276px;top:379.3px;font-size:12px;line-height:15px;color:#161616;white-space:nowrap;">Voltage [V]</div>
<div style="position:absolute;left:275px;top:395.8px;width:64px;height:23.80000000000001px;box-sizing:border-box;background:#d8d8d8;border-top:4px solid #9c9c9c;border-left:4px solid #a6a6a6;border-right:4px solid #c8c8c8;border-bottom:4px solid #c4c4c4;"></div>
<div style="position:absolute;left:280px;top:396.8px;height:23.80000000000001px;line-height:24.80000000000001px;font-size:12px;color:#101010;white-space:nowrap;">7000</div>
<div style="position:absolute;left:276px;top:417.1px;font-size:12px;line-height:15px;color:#161616;white-space:nowrap;">Current [A]</div>
<div style="position:absolute;left:275px;top:433.5px;width:64px;height:23.899999999999977px;box-sizing:border-box;background:#d8d8d8;border-top:4px solid #9c9c9c;border-left:4px solid #a6a6a6;border-right:4px solid #c8c8c8;border-bottom:4px solid #c4c4c4;"></div>
<div style="position:absolute;left:280px;top:434.5px;height:23.899999999999977px;line-height:24.899999999999977px;font-size:12px;color:#101010;white-space:nowrap;">0.00E+0</div>
<div style="position:absolute;left:276px;top:455.5px;font-size:12px;line-height:15px;color:#161616;white-space:nowrap;">Pressure [mbar]</div>
<div style="position:absolute;left:275px;top:471.3px;width:64px;height:23.899999999999977px;box-sizing:border-box;background:#d8d8d8;border-top:4px solid #9c9c9c;border-left:4px solid #a6a6a6;border-right:4px solid #c8c8c8;border-bottom:4px solid #c4c4c4;"></div>
<div style="position:absolute;left:280px;top:472.3px;height:23.899999999999977px;line-height:24.899999999999977px;font-size:12px;color:#101010;white-space:nowrap;">2.00E-9</div>
<div style="position:absolute;left:273.4px;top:504.5px;font-size:12px;line-height:15px;color:#161616;white-space:nowrap;letter-spacing:0.05px;">Ion pump interlock</div>
<div style="position:absolute;left:273px;top:520.5px;width:48px;height:18px;box-sizing:border-box;border-radius:50%;border:1px solid #5a5a5a;border-bottom:2px solid #3a3a3a;background:linear-gradient(180deg,#d0d0d0 0%,#b8b8b8 50%,#9a9a9a 100%);"></div>
<svg width="972" height="956" style="position:absolute;left:0;top:0"><path d="M303,525 L316,529.8 L303,534.5Z" fill="#44ee22"/></svg>
<div style="position:absolute;left:105.4px;top:506.5px;font-size:12px;line-height:15px;color:#161616;white-space:nowrap;letter-spacing:0.05px;">opens the roughing line if ion</div>
<div style="position:absolute;left:105.4px;top:521.2px;font-size:12px;line-height:15px;color:#161616;white-space:nowrap;letter-spacing:0.05px;">pump stops.</div>
<div style="position:absolute;left:105.4px;top:535.9px;font-size:12px;line-height:15px;color:#161616;white-space:nowrap;letter-spacing:0.05px;">has to be turned on manually</div>
<div style="position:absolute;left:105.4px;top:550.6px;font-size:12px;line-height:15px;color:#161616;white-space:nowrap;letter-spacing:0.05px;">after ion pump ramped up</div>
<div style="position:absolute;left:745.3px;top:79.5px;font-size:12px;line-height:15px;color:#161616;white-space:nowrap;letter-spacing:0.1px;">System Status</div>
<div style="position:absolute;left:745px;top:94.8px;width:202.70000000000005px;height:29.900000000000006px;box-sizing:border-box;background:#8a8a8a;"></div>
<div style="position:absolute;left:746px;top:95.8px;width:179px;height:27.900000000000006px;box-sizing:border-box;background:#fafafa;border-top:1px solid #6c6c6c;border-left:1px solid #6c6c6c;"></div>
<div style="position:absolute;left:925px;top:94.8px;width:22.700000000000045px;height:29.900000000000006px;box-sizing:border-box;background:linear-gradient(90deg,#d4d4d4 0%,#bcbcbc 60%,#7a7a7a 100%);border-top:1px solid #e8e8e8;border-left:1px solid #dcdcdc;border-bottom:2px solid #6a6a6a;"></div>
<svg width="972" height="956" style="position:absolute;left:0;top:0"><path d="M928.4,105.8 L942.4,105.8 L935.4,114.2Z" fill="none" stroke="#555" stroke-width="1"/></svg>
<div style="position:absolute;left:749px;top:101.0px;font-size:16.5px;line-height:19.5px;color:#080808;white-space:nowrap;font-weight:bold;">STANDBY</div>
<div style="position:absolute;left:745.3px;top:138.5px;font-size:12px;line-height:15px;color:#161616;white-space:nowrap;letter-spacing:0.1px;">Trap State</div>
<div style="position:absolute;left:745px;top:153.2px;width:200px;height:29.100000000000023px;box-sizing:border-box;background:#8a8a8a;"></div>
<div style="position:absolute;left:746px;top:154.2px;width:176px;height:27.100000000000023px;box-sizing:border-box;background:#f0f0f0;border-top:1px solid #6c6c6c;border-left:1px solid #6c6c6c;"></div>
<div style="position:absolute;left:922px;top:153.2px;width:23px;height:29.100000000000023px;box-sizing:border-box;background:linear-gradient(90deg,#d4d4d4 0%,#bcbcbc 60%,#7a7a7a 100%);border-top:1px solid #e8e8e8;border-left:1px solid #dcdcdc;border-bottom:2px solid #6a6a6a;"></div>
<svg width="972" height="956" style="position:absolute;left:0;top:0"><path d="M925.5,163.8 L939.5,163.8 L932.5,172.2Z" fill="none" stroke="#555" stroke-width="1"/></svg>
<div style="position:absolute;left:749px;top:159.0px;font-size:16.5px;line-height:19.5px;color:#080808;white-space:nowrap;font-weight:bold;">OFF</div>
<div style="position:absolute;left:745px;top:191.8px;width:202.70000000000005px;height:107.89999999999998px;box-sizing:border-box;border-top:1px solid #dadada;border-left:1px solid #dadada;border-right:1px solid #dadada;border-bottom:1px solid #dadada;"></div>
<div style="position:absolute;left:746.5px;top:192.8px;width:200.0px;height:105.80000000000001px;box-sizing:border-box;border:1px solid #5e5e5e;"></div>
<div style="position:absolute;left:748.3px;top:196.4px;font-size:10.8px;line-height:13.8px;color:#0a0a0a;white-space:nowrap;font-weight:bold;">Cycle Trap Times [s] &amp; Freq. [Hz]</div>
<div style="position:absolute;left:761.3px;top:212.2px;width:46.700000000000045px;height:16.100000000000023px;box-sizing:border-box;background:#cfc5b2;"></div>
<div style="position:absolute;left:763.3px;top:212.2px;height:16.100000000000023px;line-height:16.100000000000023px;font-size:12px;color:#968a7e;white-space:nowrap;">Fill Time</div>
<div style="position:absolute;left:820px;top:212.2px;width:59px;height:16.100000000000023px;box-sizing:border-box;background:#cfc5b2;"></div>
<div style="position:absolute;left:822px;top:212.2px;height:16.100000000000023px;line-height:16.100000000000023px;font-size:12px;color:#968a7e;white-space:nowrap;">Store Time</div>
<div style="position:absolute;left:889.8px;top:212.2px;width:63.200000000000045px;height:16.100000000000023px;box-sizing:border-box;background:#cfc5b2;"></div>
<div style="position:absolute;left:891.8px;top:212.2px;height:16.100000000000023px;line-height:16.100000000000023px;font-size:12px;color:#968a7e;white-space:nowrap;">Dump Time</div>
<div style="position:absolute;left:750.2px;top:228.8px;width:11.099999999999909px;height:24.299999999999983px;box-sizing:border-box;background:radial-gradient(ellipse at 50% 50%,#e6dfd0 0%,#cfc6b4 70%,#b8ae9c 100%);border-radius:6px/12px;"></div>
<svg width="972" height="956" style="position:absolute;left:0;top:0"><path d="M753.8,237.9 L755.8,233.9 L757.2,236.9 M753.8,243.9 L755.8,247.9 L757.2,244.9" stroke="#9a9080" stroke-width="0.8" fill="none"/></svg>
<div style="position:absolute;left:761.3px;top:228.3px;width:44.40000000000009px;height:25.299999999999983px;box-sizing:border-box;background:#e9e2d3;border-top:4px solid #c4baa8;border-left:3px solid #cac1ae;border-right:3px solid #d8d0c0;border-bottom:3px solid #d4ccbc;"></div>
<div style="position:absolute;left:767.3px;top:228.3px;height:25.299999999999983px;line-height:26.299999999999983px;font-size:12px;color:#968a7e;white-space:nowrap;">0.100</div>
<div style="position:absolute;left:809px;top:228.8px;width:11.5px;height:24.299999999999983px;box-sizing:border-box;background:radial-gradient(ellipse at 50% 50%,#e6dfd0 0%,#cfc6b4 70%,#b8ae9c 100%);border-radius:6px/12px;"></div>
<svg width="972" height="956" style="position:absolute;left:0;top:0"><path d="M812.8,237.9 L814.8,233.9 L816.2,236.9 M812.8,243.9 L814.8,247.9 L816.2,244.9" stroke="#9a9080" stroke-width="0.8" fill="none"/></svg>
<div style="position:absolute;left:820.5px;top:228.3px;width:43.5px;height:25.299999999999983px;box-sizing:border-box;background:#e9e2d3;border-top:4px solid #c4baa8;border-left:3px solid #cac1ae;border-right:3px solid #d8d0c0;border-bottom:3px solid #d4ccbc;"></div>
<div style="position:absolute;left:826.5px;top:228.3px;height:25.299999999999983px;line-height:26.299999999999983px;font-size:12px;color:#968a7e;white-space:nowrap;">0.010</div>
<div style="position:absolute;left:879px;top:228.8px;width:11.600000000000023px;height:24.299999999999983px;box-sizing:border-box;background:radial-gradient(ellipse at 50% 50%,#e6dfd0 0%,#cfc6b4 70%,#b8ae9c 100%);border-radius:6px/12px;"></div>
<svg width="972" height="956" style="position:absolute;left:0;top:0"><path d="M882.8,237.9 L884.8,233.9 L886.3,236.9 M882.8,243.9 L884.8,247.9 L886.3,244.9" stroke="#9a9080" stroke-width="0.8" fill="none"/></svg>
<div style="position:absolute;left:890.6px;top:228.3px;width:44.39999999999998px;height:25.299999999999983px;box-sizing:border-box;background:#e9e2d3;border-top:4px solid #c4baa8;border-left:3px solid #cac1ae;border-right:3px solid #d8d0c0;border-bottom:3px solid #d4ccbc;"></div>
<div style="position:absolute;left:896.6px;top:228.3px;height:25.299999999999983px;line-height:26.299999999999983px;font-size:12px;color:#968a7e;white-space:nowrap;">0.001</div>
<div style="position:absolute;left:789px;top:254.2px;width:47px;height:16.69999999999999px;box-sizing:border-box;background:#cfc5b2;"></div>
<div style="position:absolute;left:791px;top:254.2px;height:16.69999999999999px;line-height:16.69999999999999px;font-size:12px;color:#968a7e;white-space:nowrap;">Fill Freq.</div>
<div style="position:absolute;left:869.5px;top:254.2px;width:59.5px;height:16.69999999999999px;box-sizing:border-box;background:#cfc5b2;"></div>
<div style="position:absolute;left:871.5px;top:254.2px;height:16.69999999999999px;line-height:16.69999999999999px;font-size:12px;color:#968a7e;white-space:nowrap;">Store Freq.</div>
<div style="position:absolute;left:750.2px;top:273px;width:20.799999999999955px;height:20.69999999999999px;box-sizing:border-box;background:#cfc5b2;"></div>
<div style="position:absolute;left:753px;top:276px;width:15px;height:15px;border-radius:50%;background:radial-gradient(circle at 45% 35%,#c0f0a0 0%,#8ede6a 45%,#70c050 100%);"></div>
<div style="position:absolute;left:778.3px;top:271.7px;width:11.100000000000023px;height:23.400000000000034px;box-sizing:border-box;background:radial-gradient(ellipse at 50% 50%,#e6dfd0 0%,#cfc6b4 70%,#b8ae9c 100%);border-radius:6px/12px;"></div>
<svg width="972" height="956" style="position:absolute;left:0;top:0"><path d="M781.8,280.4 L783.8,276.4 L785.3,279.4 M781.8,286.4 L783.8,290.4 L785.3,287.4" stroke="#9a9080" stroke-width="0.8" fill="none"/></svg>
<div style="position:absolute;left:789.4px;top:271.2px;width:64.5px;height:24.400000000000034px;box-sizing:border-box;background:#e9e2d3;border-top:4px solid #c4baa8;border-left:3px solid #cac1ae;border-right:3px solid #d8d0c0;border-bottom:3px solid #d4ccbc;"></div>
<div style="position:absolute;left:795.4px;top:271.2px;height:24.400000000000034px;line-height:25.400000000000034px;font-size:12px;color:#968a7e;white-space:nowrap;">4.500E+6</div>
<div style="position:absolute;left:859px;top:271.7px;width:13.700000000000045px;height:23.400000000000034px;box-sizing:border-box;background:radial-gradient(ellipse at 50% 50%,#e6dfd0 0%,#cfc6b4 70%,#b8ae9c 100%);border-radius:6px/12px;"></div>
<svg width="972" height="956" style="position:absolute;left:0;top:0"><path d="M863.9,280.4 L865.9,276.4 L867.4,279.4 M863.9,286.4 L865.9,290.4 L867.4,287.4" stroke="#9a9080" stroke-width="0.8" fill="none"/></svg>
<div style="position:absolute;left:872.7px;top:271.2px;width:62.299999999999955px;height:24.400000000000034px;box-sizing:border-box;background:#e9e2d3;border-top:4px solid #c4baa8;border-left:3px solid #cac1ae;border-right:3px solid #d8d0c0;border-bottom:3px solid #d4ccbc;"></div>
<div style="position:absolute;left:878.7px;top:271.2px;height:24.400000000000034px;line-height:25.400000000000034px;font-size:12px;color:#968a7e;white-space:nowrap;">5.100E+6</div>
<div style="position:absolute;left:745.3px;top:301.5px;font-size:12px;line-height:15px;color:#161616;white-space:nowrap;">Messages</div>
<div style="position:absolute;left:745.3px;top:318.6px;width:201.70000000000005px;height:199.29999999999995px;box-sizing:border-box;background:#fafafa;border-top:4px solid #8a8a8a;border-left:3px solid #9a9a9a;border-right:3px solid #c8c8c8;border-bottom:2px solid #c8c8c8;"></div>
<div style="position:absolute;left:745.3px;top:519.5px;font-size:12px;line-height:15px;color:#161616;white-space:nowrap;">Gamma Ray Count [1/s]</div>
<div style="position:absolute;left:745px;top:536.3px;width:202px;height:23.40000000000009px;box-sizing:border-box;background:#d2d2d2;border-top:3px solid #8e8e8e;border-left:3px solid #9a9a9a;border-right:3px solid #c4c4c4;border-bottom:3px solid #c4c4c4;"></div>
<div style="position:absolute;left:751px;top:541.2px;font-size:12.5px;line-height:15.5px;color:#080808;white-space:nowrap;font-weight:bold;">78.5466</div>
<div style="position:absolute;left:968px;top:109px;width:4px;height:84px;box-sizing:border-box;background:#8aa2b2;"></div>
<div style="position:absolute;left:968px;top:90.1px;font-size:12px;line-height:15px;color:#161616;white-space:nowrap;">S</div>
<div style="position:absolute;left:18px;top:576px;width:950px;height:379px;box-sizing:border-box;background:#dccdb3;border-top:4px solid #ece0c6;border-left:4px solid #ece0c6;border-right:1px solid #7a6a50;border-bottom:4px solid #9a8a6e;box-shadow:inset -1px 0 0 #a09074, inset -2px 0 0 #c4b496;"></div>
<svg width="972" height="956" style="position:absolute;left:0;top:0"><rect x="91" y="598" width="211" height="270" fill="#000"/><rect x="99" y="598" width="1" height="270" fill="#5c5600"/><rect x="106" y="598" width="1" height="270" fill="#5c5600"/><rect x="114" y="598" width="1" height="270" fill="#5c5600"/><rect x="122" y="598" width="1" height="270" fill="#5c5600"/><rect x="129" y="598" width="1" height="270" fill="#5c5600"/><rect x="137" y="598" width="1" height="270" fill="#a4a200"/><rect x="145" y="598" width="1" height="270" fill="#5c5600"/><rect x="152" y="598" width="1" height="270" fill="#5c5600"/><rect x="160" y="598" width="1" height="270" fill="#5c5600"/><rect x="168" y="598" width="1" height="270" fill="#5c5600"/><rect x="175" y="598" width="1" height="270" fill="#5c5600"/><rect x="183" y="598" width="1" height="270" fill="#a4a200"/><rect x="191" y="598" width="1" height="270" fill="#5c5600"/><rect x="198" y="598" width="1" height="270" fill="#5c5600"/><rect x="206" y="598" width="1" height="270" fill="#5c5600"/><rect x="214" y="598" width="1" height="270" fill="#5c5600"/><rect x="221" y="598" width="1" height="270" fill="#5c5600"/><rect x="229" y="598" width="1" height="270" fill="#a4a200"/><rect x="237" y="598" width="1" height="270" fill="#5c5600"/><rect x="244" y="598" width="1" height="270" fill="#5c5600"/><rect x="252" y="598" width="1" height="270" fill="#5c5600"/><rect x="260" y="598" width="1" height="270" fill="#5c5600"/><rect x="267" y="598" width="1" height="270" fill="#5c5600"/><rect x="275" y="598" width="1" height="270" fill="#a4a200"/><rect x="283" y="598" width="1" height="270" fill="#5c5600"/><rect x="290" y="598" width="1" height="270" fill="#5c5600"/><rect x="298" y="598" width="1" height="270" fill="#5c5600"/><rect x="91" y="636" width="211" height="1" fill="#a4a200"/><rect x="91" y="625" width="211" height="1" fill="#5c5600"/><rect x="91" y="613" width="211" height="1" fill="#5c5600"/><rect x="91" y="607" width="211" height="1" fill="#5c5600"/><rect x="91" y="602" width="211" height="1" fill="#5c5600"/><rect x="91" y="675" width="211" height="1" fill="#a4a200"/><rect x="91" y="663" width="211" height="1" fill="#5c5600"/><rect x="91" y="652" width="211" height="1" fill="#5c5600"/><rect x="91" y="645" width="211" height="1" fill="#5c5600"/><rect x="91" y="640" width="211" height="1" fill="#5c5600"/><rect x="91" y="714" width="211" height="1" fill="#a4a200"/><rect x="91" y="702" width="211" height="1" fill="#5c5600"/><rect x="91" y="690" width="211" height="1" fill="#5c5600"/><rect x="91" y="684" width="211" height="1" fill="#5c5600"/><rect x="91" y="679" width="211" height="1" fill="#5c5600"/><rect x="91" y="752" width="211" height="1" fill="#a4a200"/><rect x="91" y="740" width="211" height="1" fill="#5c5600"/><rect x="91" y="729" width="211" height="1" fill="#5c5600"/><rect x="91" y="722" width="211" height="1" fill="#5c5600"/><rect x="91" y="717" width="211" height="1" fill="#5c5600"/><rect x="91" y="790" width="211" height="1" fill="#a4a200"/><rect x="91" y="779" width="211" height="1" fill="#5c5600"/><rect x="91" y="767" width="211" height="1" fill="#5c5600"/><rect x="91" y="761" width="211" height="1" fill="#5c5600"/><rect x="91" y="756" width="211" height="1" fill="#5c5600"/><rect x="91" y="829" width="211" height="1" fill="#a4a200"/><rect x="91" y="817" width="211" height="1" fill="#5c5600"/><rect x="91" y="806" width="211" height="1" fill="#5c5600"/><rect x="91" y="799" width="211" height="1" fill="#5c5600"/><rect x="91" y="794" width="211" height="1" fill="#5c5600"/><rect x="91" y="856" width="211" height="1" fill="#5c5600"/><rect x="91" y="844" width="211" height="1" fill="#5c5600"/><rect x="91" y="838" width="211" height="1" fill="#5c5600"/><rect x="91" y="833" width="211" height="1" fill="#5c5600"/><rect x="91" y="600" width="211" height="6" fill="#ffff80"/><rect x="91" y="619" width="211" height="9" fill="#55ff44"/><rect x="110" y="619" width="3" height="3" fill="#000"/><rect x="124" y="619" width="3" height="3" fill="#000"/><rect x="129" y="619" width="4" height="3" fill="#000"/><rect x="135" y="619" width="10" height="2" fill="#000"/><rect x="159" y="619" width="4" height="2" fill="#000"/><rect x="170" y="619" width="7" height="2" fill="#000"/><rect x="205" y="619" width="5" height="3" fill="#000"/><rect x="212" y="619" width="10" height="2" fill="#000"/><rect x="233" y="619" width="10" height="3" fill="#000"/><rect x="271" y="619" width="5" height="2" fill="#000"/><rect x="91" y="800" width="15" height="5" fill="#ff1040"/><rect x="104" y="803" width="97" height="5" fill="#ff1040"/><rect x="175" y="808" width="127" height="5" fill="#ff1040"/><rect x="91" y="833" width="211" height="6" fill="#6080ff"/><rect x="108" y="769" width="5" height="67" fill="#6080ff"/><rect x="284" y="769" width="5" height="67" fill="#6080ff"/><rect x="91" y="847" width="211" height="6" fill="#c8aaa0"/><rect x="90" y="597" width="212" height="1" fill="#3c3c3c"/><rect x="90" y="597" width="1" height="271" fill="#3c3c3c"/><rect x="302" y="597" width="1" height="272" fill="#ececec"/><rect x="90" y="868" width="213" height="1" fill="#ececec"/><rect x="84" y="598" width="5" height="1" fill="#111"/><rect x="84" y="636" width="5" height="1" fill="#111"/><rect x="84" y="675" width="5" height="1" fill="#111"/><rect x="84" y="714" width="5" height="1" fill="#111"/><rect x="84" y="752" width="5" height="1" fill="#111"/><rect x="84" y="790" width="5" height="1" fill="#111"/><rect x="84" y="829" width="5" height="1" fill="#111"/><rect x="84" y="868" width="5" height="1" fill="#111"/><rect x="91" y="870" width="1" height="5" fill="#111"/><rect x="137" y="870" width="1" height="5" fill="#111"/><rect x="183" y="870" width="1" height="5" fill="#111"/><rect x="229" y="870" width="1" height="5" fill="#111"/><rect x="275" y="870" width="1" height="5" fill="#111"/><rect x="301" y="870" width="1" height="5" fill="#111"/></svg>
<div style="position:absolute;right:890.5px;top:591.0px;font-size:12px;line-height:15px;color:#161616;white-space:nowrap;text-align:right;letter-spacing:-0.75px;">1.0E-3</div>
<div style="position:absolute;right:890.5px;top:629.0px;font-size:12px;line-height:15px;color:#161616;white-space:nowrap;text-align:right;letter-spacing:-0.75px;">1.0E-4</div>
<div style="position:absolute;right:890.5px;top:668.0px;font-size:12px;line-height:15px;color:#161616;white-space:nowrap;text-align:right;letter-spacing:-0.75px;">1.0E-5</div>
<div style="position:absolute;right:890.5px;top:707.0px;font-size:12px;line-height:15px;color:#161616;white-space:nowrap;text-align:right;letter-spacing:-0.75px;">1.0E-6</div>
<div style="position:absolute;right:890.5px;top:745.0px;font-size:12px;line-height:15px;color:#161616;white-space:nowrap;text-align:right;letter-spacing:-0.75px;">1.0E-7</div>
<div style="position:absolute;right:890.5px;top:783.0px;font-size:12px;line-height:15px;color:#161616;white-space:nowrap;text-align:right;letter-spacing:-0.75px;">1.0E-8</div>
<div style="position:absolute;right:890.5px;top:822.0px;font-size:12px;line-height:15px;color:#161616;white-space:nowrap;text-align:right;letter-spacing:-0.75px;">1.0E-9</div>
<div style="position:absolute;right:890.5px;top:861.0px;font-size:12px;line-height:15px;color:#161616;white-space:nowrap;text-align:right;letter-spacing:-0.75px;">1.0E-10</div>
<div style="position:absolute;left:-59.3px;width:300px;text-align:center;top:875.7px;font-size:12px;line-height:15px;color:#161616;white-space:nowrap;letter-spacing:-0.8px;">00:00</div>
<div style="position:absolute;left:-13.300000000000011px;width:300px;text-align:center;top:875.7px;font-size:12px;line-height:15px;color:#161616;white-space:nowrap;letter-spacing:-0.8px;">02:00</div>
<div style="position:absolute;left:32.69999999999999px;width:300px;text-align:center;top:875.7px;font-size:12px;line-height:15px;color:#161616;white-space:nowrap;letter-spacing:-0.8px;">04:00</div>
<div style="position:absolute;left:78.69999999999999px;width:300px;text-align:center;top:875.7px;font-size:12px;line-height:15px;color:#161616;white-space:nowrap;letter-spacing:-0.8px;">06:00</div>
<div style="position:absolute;left:150.7px;width:300px;text-align:center;top:875.7px;font-size:12px;line-height:15px;color:#161616;white-space:nowrap;letter-spacing:-0.8px;">09:07</div>
<div style="position:absolute;left:58.30000000000001px;width:300px;text-align:center;top:892.7px;font-size:12px;line-height:15px;color:#161616;white-space:nowrap;">Time</div>
<div style="position:absolute;left:-17.3px;top:723.3px;width:100px;height:16px;line-height:16px;text-align:center;font-size:12px;color:#161616;transform:rotate(-90deg);white-space:nowrap;letter-spacing:-0.25px;">Pressure (mbar)</div>
<svg width="972" height="956" style="position:absolute;left:0;top:0"><rect x="409" y="586" width="213" height="268" fill="#000"/><rect x="415" y="586" width="1" height="268" fill="#5c5600"/><rect x="420" y="586" width="1" height="268" fill="#5c5600"/><rect x="426" y="586" width="1" height="268" fill="#5c5600"/><rect x="432" y="586" width="1" height="268" fill="#5c5600"/><rect x="438" y="586" width="1" height="268" fill="#5c5600"/><rect x="444" y="586" width="1" height="268" fill="#5c5600"/><rect x="450" y="586" width="1" height="268" fill="#5c5600"/><rect x="455" y="586" width="1" height="268" fill="#5c5600"/><rect x="461" y="586" width="1" height="268" fill="#a4a200"/><rect x="467" y="586" width="1" height="268" fill="#5c5600"/><rect x="473" y="586" width="1" height="268" fill="#5c5600"/><rect x="479" y="586" width="1" height="268" fill="#5c5600"/><rect x="485" y="586" width="1" height="268" fill="#5c5600"/><rect x="490" y="586" width="1" height="268" fill="#5c5600"/><rect x="496" y="586" width="1" height="268" fill="#5c5600"/><rect x="502" y="586" width="1" height="268" fill="#5c5600"/><rect x="508" y="586" width="1" height="268" fill="#5c5600"/><rect x="514" y="586" width="1" height="268" fill="#a4a200"/><rect x="520" y="586" width="1" height="268" fill="#5c5600"/><rect x="525" y="586" width="1" height="268" fill="#5c5600"/><rect x="531" y="586" width="1" height="268" fill="#5c5600"/><rect x="537" y="586" width="1" height="268" fill="#5c5600"/><rect x="543" y="586" width="1" height="268" fill="#5c5600"/><rect x="549" y="586" width="1" height="268" fill="#5c5600"/><rect x="555" y="586" width="1" height="268" fill="#5c5600"/><rect x="560" y="586" width="1" height="268" fill="#5c5600"/><rect x="566" y="586" width="1" height="268" fill="#a4a200"/><rect x="572" y="586" width="1" height="268" fill="#5c5600"/><rect x="578" y="586" width="1" height="268" fill="#5c5600"/><rect x="584" y="586" width="1" height="268" fill="#5c5600"/><rect x="590" y="586" width="1" height="268" fill="#5c5600"/><rect x="595" y="586" width="1" height="268" fill="#5c5600"/><rect x="601" y="586" width="1" height="268" fill="#5c5600"/><rect x="607" y="586" width="1" height="268" fill="#5c5600"/><rect x="613" y="586" width="1" height="268" fill="#5c5600"/><rect x="619" y="586" width="1" height="268" fill="#a4a200"/><rect x="409" y="591" width="213" height="1" fill="#5c5600"/><rect x="409" y="597" width="213" height="1" fill="#5c5600"/><rect x="409" y="602" width="213" height="1" fill="#5c5600"/><rect x="409" y="607" width="213" height="1" fill="#5c5600"/><rect x="409" y="613" width="213" height="1" fill="#a4a200"/><rect x="409" y="618" width="213" height="1" fill="#5c5600"/><rect x="409" y="623" width="213" height="1" fill="#5c5600"/><rect x="409" y="629" width="213" height="1" fill="#5c5600"/><rect x="409" y="634" width="213" height="1" fill="#5c5600"/><rect x="409" y="639" width="213" height="1" fill="#a4a200"/><rect x="409" y="645" width="213" height="1" fill="#5c5600"/><rect x="409" y="650" width="213" height="1" fill="#5c5600"/><rect x="409" y="655" width="213" height="1" fill="#5c5600"/><rect x="409" y="661" width="213" height="1" fill="#5c5600"/><rect x="409" y="666" width="213" height="1" fill="#a4a200"/><rect x="409" y="671" width="213" height="1" fill="#5c5600"/><rect x="409" y="677" width="213" height="1" fill="#5c5600"/><rect x="409" y="682" width="213" height="1" fill="#5c5600"/><rect x="409" y="687" width="213" height="1" fill="#5c5600"/><rect x="409" y="693" width="213" height="1" fill="#a4a200"/><rect x="409" y="698" width="213" height="1" fill="#5c5600"/><rect x="409" y="704" width="213" height="1" fill="#5c5600"/><rect x="409" y="709" width="213" height="1" fill="#5c5600"/><rect x="409" y="714" width="213" height="1" fill="#5c5600"/><rect x="409" y="720" width="213" height="1" fill="#a4a200"/><rect x="409" y="725" width="213" height="1" fill="#5c5600"/><rect x="409" y="730" width="213" height="1" fill="#5c5600"/><rect x="409" y="736" width="213" height="1" fill="#5c5600"/><rect x="409" y="741" width="213" height="1" fill="#5c5600"/><rect x="409" y="746" width="213" height="1" fill="#a4a200"/><rect x="409" y="752" width="213" height="1" fill="#5c5600"/><rect x="409" y="757" width="213" height="1" fill="#5c5600"/><rect x="409" y="762" width="213" height="1" fill="#5c5600"/><rect x="409" y="768" width="213" height="1" fill="#5c5600"/><rect x="409" y="773" width="213" height="1" fill="#a4a200"/><rect x="409" y="778" width="213" height="1" fill="#5c5600"/><rect x="409" y="784" width="213" height="1" fill="#5c5600"/><rect x="409" y="789" width="213" height="1" fill="#5c5600"/><rect x="409" y="794" width="213" height="1" fill="#5c5600"/><rect x="409" y="800" width="213" height="1" fill="#a4a200"/><rect x="409" y="805" width="213" height="1" fill="#5c5600"/><rect x="409" y="811" width="213" height="1" fill="#5c5600"/><rect x="409" y="816" width="213" height="1" fill="#5c5600"/><rect x="409" y="821" width="213" height="1" fill="#5c5600"/><rect x="409" y="827" width="213" height="1" fill="#a4a200"/><rect x="409" y="832" width="213" height="1" fill="#5c5600"/><rect x="409" y="837" width="213" height="1" fill="#5c5600"/><rect x="409" y="843" width="213" height="1" fill="#5c5600"/><rect x="409" y="848" width="213" height="1" fill="#5c5600"/><path d="M462,611 L465.5,650 L467.5,700 L470,790 Q471,796.5 478,796.5 L520,801.5 L560,805.5 L600,808.5 L621,809.5" stroke="#10f0c8" stroke-width="5" fill="none" stroke-linejoin="round" stroke-linecap="round"/><path d="M462.5,630 L464.5,680 L467,740 L469.4,798 Q470,804 477,804 L520,806 L560,808 L600,809.4 L621,809.8" stroke="#ff0040" stroke-width="5.5" fill="none" stroke-linejoin="round" stroke-linecap="round"/><rect x="459" y="827" width="163" height="5" fill="#ffee00"/><rect x="408" y="585" width="214" height="1" fill="#3c3c3c"/><rect x="408" y="585" width="1" height="269" fill="#3c3c3c"/><rect x="622" y="585" width="1" height="270" fill="#ececec"/><rect x="408" y="854" width="215" height="1" fill="#ececec"/><rect x="402" y="586" width="5" height="1" fill="#111"/><rect x="402" y="613" width="5" height="1" fill="#111"/><rect x="402" y="639" width="5" height="1" fill="#111"/><rect x="402" y="666" width="5" height="1" fill="#111"/><rect x="402" y="693" width="5" height="1" fill="#111"/><rect x="402" y="720" width="5" height="1" fill="#111"/><rect x="402" y="746" width="5" height="1" fill="#111"/><rect x="402" y="773" width="5" height="1" fill="#111"/><rect x="402" y="800" width="5" height="1" fill="#111"/><rect x="402" y="827" width="5" height="1" fill="#111"/><rect x="402" y="853" width="5" height="1" fill="#111"/><rect x="409" y="856" width="1" height="5" fill="#111"/><rect x="461" y="856" width="1" height="5" fill="#111"/><rect x="514" y="856" width="1" height="5" fill="#111"/><rect x="566" y="856" width="1" height="5" fill="#111"/><rect x="619" y="856" width="1" height="5" fill="#111"/><rect x="621" y="856" width="1" height="5" fill="#111"/></svg>
<div style="position:absolute;right:573px;top:580.0px;font-size:12px;line-height:15px;color:#161616;white-space:nowrap;text-align:right;letter-spacing:-0.5px;">90.0</div>
<div style="position:absolute;right:573px;top:607.0px;font-size:12px;line-height:15px;color:#161616;white-space:nowrap;text-align:right;letter-spacing:-0.5px;">80.0</div>
<div style="position:absolute;right:573px;top:633.0px;font-size:12px;line-height:15px;color:#161616;white-space:nowrap;text-align:right;letter-spacing:-0.5px;">70.0</div>
<div style="position:absolute;right:573px;top:660.0px;font-size:12px;line-height:15px;color:#161616;white-space:nowrap;text-align:right;letter-spacing:-0.5px;">60.0</div>
<div style="position:absolute;right:573px;top:687.0px;font-size:12px;line-height:15px;color:#161616;white-space:nowrap;text-align:right;letter-spacing:-0.5px;">50.0</div>
<div style="position:absolute;right:573px;top:714.0px;font-size:12px;line-height:15px;color:#161616;white-space:nowrap;text-align:right;letter-spacing:-0.5px;">40.0</div>
<div style="position:absolute;right:573px;top:740.0px;font-size:12px;line-height:15px;color:#161616;white-space:nowrap;text-align:right;letter-spacing:-0.5px;">30.0</div>
<div style="position:absolute;right:573px;top:767.0px;font-size:12px;line-height:15px;color:#161616;white-space:nowrap;text-align:right;letter-spacing:-0.5px;">20.0</div>
<div style="position:absolute;right:573px;top:794.0px;font-size:12px;line-height:15px;color:#161616;white-space:nowrap;text-align:right;letter-spacing:-0.5px;">10.0</div>
<div style="position:absolute;right:573px;top:821.0px;font-size:12px;line-height:15px;color:#161616;white-space:nowrap;text-align:right;letter-spacing:-0.5px;">0.0</div>
<div style="position:absolute;right:573px;top:847.0px;font-size:12px;line-height:15px;color:#161616;white-space:nowrap;text-align:right;letter-spacing:-0.5px;">-10.0</div>
<div style="position:absolute;left:258.5px;width:300px;text-align:center;top:861.7px;font-size:12px;line-height:15px;color:#161616;white-space:nowrap;letter-spacing:-0.5px;">21:00</div>
<div style="position:absolute;left:258.5px;width:300px;text-align:center;top:877.3px;font-size:12px;line-height:15px;color:#161616;white-space:nowrap;letter-spacing:-0.3px;">4/23/2023</div>
<div style="position:absolute;left:363.5px;width:300px;text-align:center;top:861.7px;font-size:12px;line-height:15px;color:#161616;white-space:nowrap;letter-spacing:-0.5px;">03:00</div>
<div style="position:absolute;left:363.5px;width:300px;text-align:center;top:877.3px;font-size:12px;line-height:15px;color:#161616;white-space:nowrap;letter-spacing:-0.3px;">4/24/2023</div>
<div style="position:absolute;left:470.54166666666674px;width:300px;text-align:center;top:861.7px;font-size:12px;line-height:15px;color:#161616;white-space:nowrap;letter-spacing:-0.5px;">09:07</div>
<div style="position:absolute;left:470.54166666666674px;width:300px;text-align:center;top:877.3px;font-size:12px;line-height:15px;color:#161616;white-space:nowrap;letter-spacing:-0.3px;">4/24/2023</div>
<div style="position:absolute;left:350px;width:300px;text-align:center;top:894.5px;font-size:12px;line-height:15px;color:#161616;white-space:nowrap;">Time</div>
<div style="position:absolute;left:312.8px;top:711.4px;width:100px;height:16px;line-height:16px;text-align:center;font-size:12px;color:#161616;transform:rotate(-90deg);white-space:nowrap;letter-spacing:-0.15px;">Temperature (K)</div>
<div style="position:absolute;left:655px;top:587px;width:312px;height:312px;box-sizing:border-box;background:linear-gradient(90deg,#b0b0b0 0px,#d4d4d4 2px,#d4d4d4 11px,#c0c0c0 13px,#c0c0c0 calc(100% - 14px),#8a8a8a calc(100% - 1px),#505050 100%);border-top:2px solid #d2d2d2;border-bottom:2px solid #8a8a8a;"></div>
<svg width="972" height="956" style="position:absolute;left:0;top:0"><rect x="737" y="597" width="186" height="245" fill="#000"/><rect x="742" y="597" width="1" height="245" fill="#5c5600"/><rect x="747" y="597" width="1" height="245" fill="#5c5600"/><rect x="752" y="597" width="1" height="245" fill="#5c5600"/><rect x="757" y="597" width="1" height="245" fill="#5c5600"/><rect x="762" y="597" width="1" height="245" fill="#5c5600"/><rect x="768" y="597" width="1" height="245" fill="#5c5600"/><rect x="773" y="597" width="1" height="245" fill="#5c5600"/><rect x="778" y="597" width="1" height="245" fill="#5c5600"/><rect x="783" y="597" width="1" height="245" fill="#ffff00"/><rect x="788" y="597" width="1" height="245" fill="#5c5600"/><rect x="793" y="597" width="1" height="245" fill="#5c5600"/><rect x="798" y="597" width="1" height="245" fill="#5c5600"/><rect x="803" y="597" width="1" height="245" fill="#5c5600"/><rect x="808" y="597" width="1" height="245" fill="#5c5600"/><rect x="813" y="597" width="1" height="245" fill="#5c5600"/><rect x="818" y="597" width="1" height="245" fill="#5c5600"/><rect x="823" y="597" width="1" height="245" fill="#5c5600"/><rect x="829" y="597" width="1" height="245" fill="#a4a200"/><rect x="834" y="597" width="1" height="245" fill="#5c5600"/><rect x="839" y="597" width="1" height="245" fill="#5c5600"/><rect x="844" y="597" width="1" height="245" fill="#5c5600"/><rect x="849" y="597" width="1" height="245" fill="#5c5600"/><rect x="854" y="597" width="1" height="245" fill="#5c5600"/><rect x="859" y="597" width="1" height="245" fill="#5c5600"/><rect x="864" y="597" width="1" height="245" fill="#5c5600"/><rect x="869" y="597" width="1" height="245" fill="#5c5600"/><rect x="874" y="597" width="1" height="245" fill="#a4a200"/><rect x="879" y="597" width="1" height="245" fill="#5c5600"/><rect x="884" y="597" width="1" height="245" fill="#5c5600"/><rect x="890" y="597" width="1" height="245" fill="#5c5600"/><rect x="895" y="597" width="1" height="245" fill="#5c5600"/><rect x="900" y="597" width="1" height="245" fill="#5c5600"/><rect x="905" y="597" width="1" height="245" fill="#5c5600"/><rect x="910" y="597" width="1" height="245" fill="#5c5600"/><rect x="915" y="597" width="1" height="245" fill="#5c5600"/><rect x="920" y="597" width="1" height="245" fill="#a4a200"/><rect x="737" y="602" width="186" height="1" fill="#5c5600"/><rect x="737" y="607" width="186" height="1" fill="#5c5600"/><rect x="737" y="612" width="186" height="1" fill="#5c5600"/><rect x="737" y="616" width="186" height="1" fill="#5c5600"/><rect x="737" y="621" width="186" height="1" fill="#a4a200"/><rect x="737" y="626" width="186" height="1" fill="#5c5600"/><rect x="737" y="631" width="186" height="1" fill="#5c5600"/><rect x="737" y="636" width="186" height="1" fill="#5c5600"/><rect x="737" y="641" width="186" height="1" fill="#5c5600"/><rect x="737" y="646" width="186" height="1" fill="#a4a200"/><rect x="737" y="651" width="186" height="1" fill="#5c5600"/><rect x="737" y="655" width="186" height="1" fill="#5c5600"/><rect x="737" y="660" width="186" height="1" fill="#5c5600"/><rect x="737" y="665" width="186" height="1" fill="#5c5600"/><rect x="737" y="670" width="186" height="1" fill="#a4a200"/><rect x="737" y="675" width="186" height="1" fill="#5c5600"/><rect x="737" y="680" width="186" height="1" fill="#5c5600"/><rect x="737" y="685" width="186" height="1" fill="#5c5600"/><rect x="737" y="690" width="186" height="1" fill="#5c5600"/><rect x="737" y="695" width="186" height="1" fill="#a4a200"/><rect x="737" y="699" width="186" height="1" fill="#5c5600"/><rect x="737" y="704" width="186" height="1" fill="#5c5600"/><rect x="737" y="709" width="186" height="1" fill="#5c5600"/><rect x="737" y="714" width="186" height="1" fill="#5c5600"/><rect x="737" y="719" width="186" height="1" fill="#a4a200"/><rect x="737" y="724" width="186" height="1" fill="#5c5600"/><rect x="737" y="729" width="186" height="1" fill="#5c5600"/><rect x="737" y="734" width="186" height="1" fill="#5c5600"/><rect x="737" y="738" width="186" height="1" fill="#5c5600"/><rect x="737" y="743" width="186" height="1" fill="#a4a200"/><rect x="737" y="748" width="186" height="1" fill="#5c5600"/><rect x="737" y="753" width="186" height="1" fill="#5c5600"/><rect x="737" y="758" width="186" height="1" fill="#5c5600"/><rect x="737" y="763" width="186" height="1" fill="#5c5600"/><rect x="737" y="768" width="186" height="1" fill="#a4a200"/><rect x="737" y="773" width="186" height="1" fill="#5c5600"/><rect x="737" y="777" width="186" height="1" fill="#5c5600"/><rect x="737" y="782" width="186" height="1" fill="#5c5600"/><rect x="737" y="787" width="186" height="1" fill="#5c5600"/><rect x="737" y="792" width="186" height="1" fill="#a4a200"/><rect x="737" y="797" width="186" height="1" fill="#5c5600"/><rect x="737" y="802" width="186" height="1" fill="#5c5600"/><rect x="737" y="807" width="186" height="1" fill="#5c5600"/><rect x="737" y="812" width="186" height="1" fill="#5c5600"/><rect x="737" y="817" width="186" height="1" fill="#a4a200"/><rect x="737" y="821" width="186" height="1" fill="#5c5600"/><rect x="737" y="826" width="186" height="1" fill="#5c5600"/><rect x="737" y="831" width="186" height="1" fill="#5c5600"/><rect x="737" y="836" width="186" height="1" fill="#5c5600"/><rect x="737" y="840" width="46" height="2" fill="#e8e000"/><rect x="781" y="839" width="142" height="2" fill="#ff0038"/><rect x="781" y="841" width="142" height="1" fill="#f0c000"/><rect x="921" y="608" width="2" height="234" fill="#ff0038"/><rect x="736" y="596" width="187" height="1" fill="#3c3c3c"/><rect x="736" y="596" width="1" height="246" fill="#3c3c3c"/><rect x="923" y="596" width="1" height="247" fill="#ececec"/><rect x="736" y="842" width="188" height="1" fill="#ececec"/><rect x="730" y="597" width="5" height="1" fill="#111"/><rect x="730" y="621" width="5" height="1" fill="#111"/><rect x="730" y="646" width="5" height="1" fill="#111"/><rect x="730" y="670" width="5" height="1" fill="#111"/><rect x="730" y="695" width="5" height="1" fill="#111"/><rect x="730" y="719" width="5" height="1" fill="#111"/><rect x="730" y="743" width="5" height="1" fill="#111"/><rect x="730" y="768" width="5" height="1" fill="#111"/><rect x="730" y="792" width="5" height="1" fill="#111"/><rect x="730" y="817" width="5" height="1" fill="#111"/><rect x="730" y="841" width="5" height="1" fill="#111"/><rect x="737" y="844" width="1" height="5" fill="#111"/><rect x="783" y="844" width="1" height="5" fill="#111"/><rect x="829" y="844" width="1" height="5" fill="#111"/><rect x="874" y="844" width="1" height="5" fill="#111"/><rect x="920" y="844" width="1" height="5" fill="#111"/><rect x="922" y="844" width="1" height="5" fill="#111"/></svg>
<div style="position:absolute;right:244px;top:591.0px;font-size:12px;line-height:15px;color:#161616;white-space:nowrap;text-align:right;letter-spacing:-0.5px;">100</div>
<div style="position:absolute;right:244px;top:615.0px;font-size:12px;line-height:15px;color:#161616;white-space:nowrap;text-align:right;letter-spacing:-0.5px;">90</div>
<div style="position:absolute;right:244px;top:640.0px;font-size:12px;line-height:15px;color:#161616;white-space:nowrap;text-align:right;letter-spacing:-0.5px;">80</div>
<div style="position:absolute;right:244px;top:664.0px;font-size:12px;line-height:15px;color:#161616;white-space:nowrap;text-align:right;letter-spacing:-0.5px;">70</div>
<div style="position:absolute;right:244px;top:689.0px;font-size:12px;line-height:15px;color:#161616;white-space:nowrap;text-align:right;letter-spacing:-0.5px;">60</div>
<div style="position:absolute;right:244px;top:713.0px;font-size:12px;line-height:15px;color:#161616;white-space:nowrap;text-align:right;letter-spacing:-0.5px;">50</div>
<div style="position:absolute;right:244px;top:737.0px;font-size:12px;line-height:15px;color:#161616;white-space:nowrap;text-align:right;letter-spacing:-0.5px;">40</div>
<div style="position:absolute;right:244px;top:762.0px;font-size:12px;line-height:15px;color:#161616;white-space:nowrap;text-align:right;letter-spacing:-0.5px;">30</div>
<div style="position:absolute;right:244px;top:786.0px;font-size:12px;line-height:15px;color:#161616;white-space:nowrap;text-align:right;letter-spacing:-0.5px;">20</div>
<div style="position:absolute;right:244px;top:811.0px;font-size:12px;line-height:15px;color:#161616;white-space:nowrap;text-align:right;letter-spacing:-0.5px;">10</div>
<div style="position:absolute;right:244px;top:835.0px;font-size:12px;line-height:15px;color:#161616;white-space:nowrap;text-align:right;letter-spacing:-0.5px;">0</div>
<div style="position:absolute;left:587.0px;width:300px;text-align:center;top:850.1px;font-size:12px;line-height:15px;color:#161616;white-space:nowrap;letter-spacing:-0.5px;">21:00</div>
<div style="position:absolute;left:587.0px;width:300px;text-align:center;top:864.9px;font-size:12px;line-height:15px;color:#161616;white-space:nowrap;letter-spacing:-0.3px;">4/23/2023</div>
<div style="position:absolute;left:678.5px;width:300px;text-align:center;top:850.1px;font-size:12px;line-height:15px;color:#161616;white-space:nowrap;letter-spacing:-0.5px;">03:00</div>
<div style="position:absolute;left:678.5px;width:300px;text-align:center;top:864.9px;font-size:12px;line-height:15px;color:#161616;white-space:nowrap;letter-spacing:-0.3px;">4/24/2023</div>
<div style="position:absolute;left:771.7791666666667px;width:300px;text-align:center;top:850.1px;font-size:12px;line-height:15px;color:#161616;white-space:nowrap;letter-spacing:-0.5px;">09:07</div>
<div style="position:absolute;left:771.7791666666667px;width:300px;text-align:center;top:864.9px;font-size:12px;line-height:15px;color:#161616;white-space:nowrap;letter-spacing:-0.3px;">4/24/2023</div>
<div style="position:absolute;left:682.4px;width:300px;text-align:center;top:882.1px;font-size:12px;line-height:15px;color:#161616;white-space:nowrap;">Time</div>
<div style="position:absolute;left:648.6px;top:710.8px;width:100px;height:16px;line-height:16px;text-align:center;font-size:12px;color:#161616;transform:rotate(-90deg);white-space:nowrap;letter-spacing:0;">Counts/sec</div>
<div style="position:absolute;left:20px;top:918px;width:56px;height:26px;box-sizing:border-box;background:#d4d4d4;border-top:3px solid #a89a84;border-left:3px solid #b0a28c;border-right:2px solid #efe3cf;border-bottom:3px solid #efe3cf;"></div>
<div style="position:absolute;left:26px;top:924.5px;font-size:12px;line-height:15px;color:#101010;white-space:nowrap;">509.3</div>
<div style="position:absolute;left:80px;top:919.5px;font-size:12px;line-height:15px;color:#161616;white-space:nowrap;">Cycle time [ms]</div>
<div style="position:absolute;left:79px;top:934px;width:74px;height:10.5px;box-sizing:border-box;background:#e4d8c4;border-top:1px solid #a89a84;"></div>
<div style="position:absolute;left:80.5px;top:935.6px;width:71.1px;height:7.399999999999977px;box-sizing:border-box;background:linear-gradient(180deg,#2a4a1a 0%,#6a8a50 30%,#1e3a10 60%,#142a08 100%);"></div>
<div style="position:absolute;left:193px;top:917px;width:204px;height:33px;box-sizing:border-box;background:linear-gradient(180deg,#d2d2d2 0%,#c6c6c6 50%,#b6b6b6 100%);border:1px solid #3c3c3c;box-shadow:inset 6px 0 4px -3px #e2e2e2, inset -7px 0 5px -3px #505050, inset 0 2px 1px #dedede, inset 0 -2px 2px #8a8a8a;"></div>
<div style="position:absolute;left:144.5px;width:300px;text-align:center;top:924.5px;font-size:16px;line-height:19px;color:#ff0000;white-space:nowrap;font-weight:bold;">STOP PROGRAM</div>
<div style="position:absolute;left:436px;top:912.7px;width:234px;height:35.799999999999955px;box-sizing:border-box;background:#80ff70;border-top:4px solid #b4a68c;border-left:4px solid #b8aa90;border-right:3px solid #ece0c8;border-bottom:3px solid #ece0c8;"></div>
<div style="position:absolute;left:402.5px;width:300px;text-align:center;top:922.2px;font-size:19.5px;line-height:22.5px;color:#101010;white-space:nowrap;letter-spacing:-0.3px;">System OK</div>
<div style="position:absolute;left:700px;top:926.5px;font-size:12px;line-height:15px;color:#161616;white-space:nowrap;letter-spacing:0;">Last moderator grown</div>
<div style="position:absolute;left:820.6px;top:920.3px;width:130.39999999999998px;height:24.200000000000045px;box-sizing:border-box;background:#d6d6d6;border-top:3px solid #a89a84;border-left:3px solid #b0a28c;border-right:3px solid #efe3cf;border-bottom:3px solid #efe3cf;"></div>
<div style="position:absolute;left:826px;top:926.0px;font-size:12px;line-height:15px;color:#101010;white-space:nowrap;letter-spacing:-0.4px;">Thu 20 Apr 2023 10:21</div>
</body></html>
